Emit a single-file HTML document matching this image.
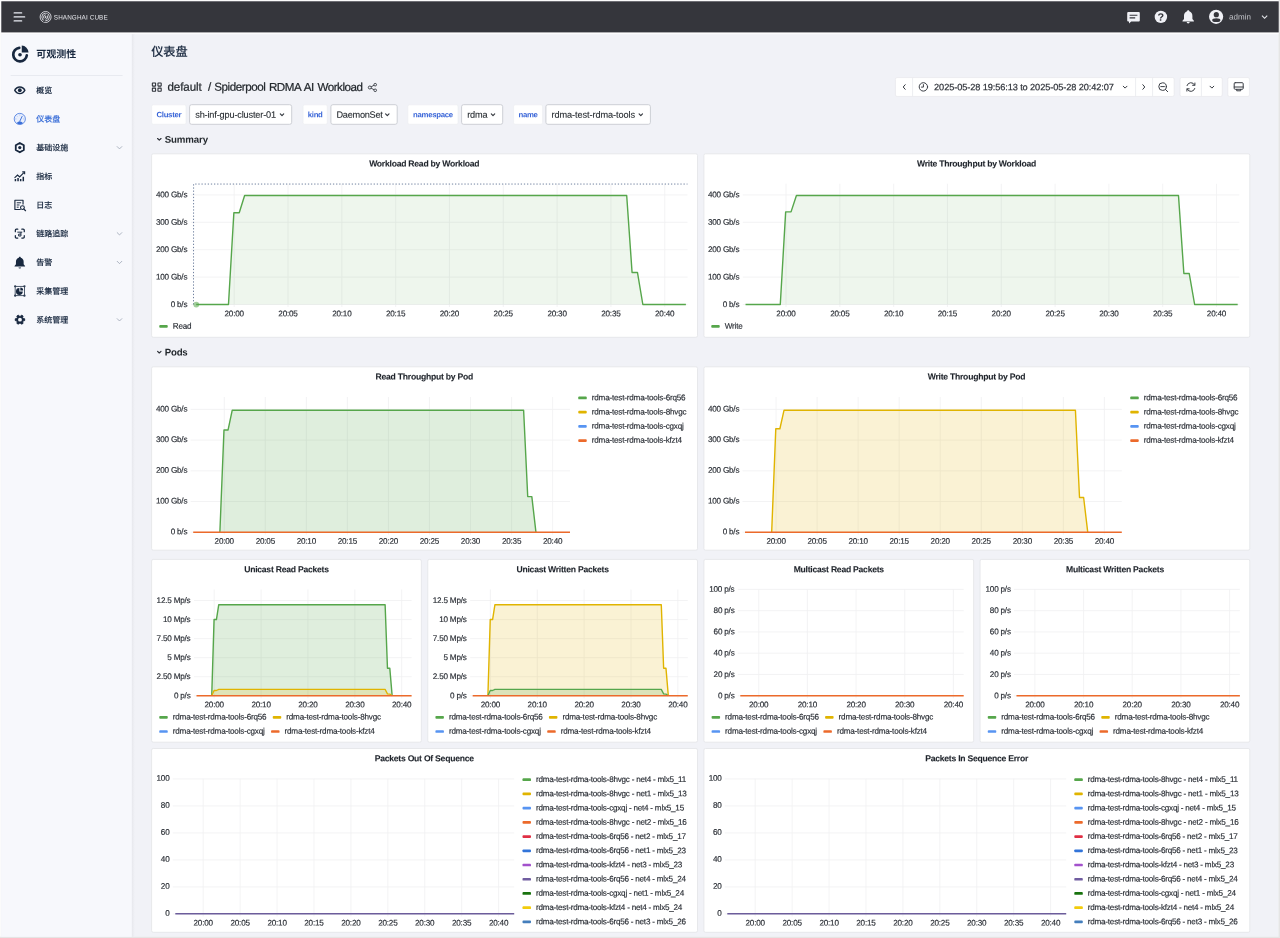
<!DOCTYPE html>
<html lang="zh-CN"><head><meta charset="utf-8"><title>仪表盘 - Spiderpool RDMA AI Workload</title>
<style>
*{box-sizing:border-box;margin:0;padding:0}
html,body{width:1280px;height:938px;overflow:hidden;background:#fff}
body{font-family:"Liberation Sans","Noto Sans CJK SC",sans-serif;color:#24292e;position:relative}
#frame{will-change:transform;position:absolute;left:0;top:0;width:1280px;height:938px;background:#fafafa;overflow:hidden}
#header{position:absolute;left:0;top:0;width:1280px;height:32px}
#sidebar{position:absolute;left:0;top:32px;width:140px;height:906px}
.abs{position:absolute}
</style></head>
<body>
<div id="frame">
<svg width="1280" height="938" viewBox="0 0 1280 938" style="position:absolute;left:0;top:0"><defs><linearGradient id="sh" x1="0" x2="1" y1="0" y2="0"><stop offset="0" stop-color="#e6e7ec"/><stop offset="0.35" stop-color="#eaebf0"/><stop offset="1" stop-color="#f1f2f7"/></linearGradient></defs><rect x="0" y="0" width="1280" height="938" fill="#fbfbfb"/><rect x="1.3" y="1.3" width="1277.3" height="935.6" fill="#f1f2f7"/><rect x="1278.5" y="0" width="1.5" height="938" fill="#e5e5e5"/><rect x="0" y="936.8" width="1280" height="1.2" fill="#e5e5e4"/><rect x="1.3" y="32" width="1277.3" height="2.2" fill="#fdfdfe"/><rect x="1.3" y="1.3" width="1277.4" height="31.1" fill="#35363c"/><rect x="131.7" y="34.2" width="3.2" height="902.6" fill="url(#sh)"/><rect x="1.3" y="34.2" width="130.4" height="902.6" fill="#f7f8fc"/><rect x="151.65" y="104.85" width="34.40" height="19.40" rx="1.6" fill="#fff" stroke="#eceef1" stroke-width="0.7"/><rect x="303.05" y="104.85" width="24.20" height="19.40" rx="1.6" fill="#fff" stroke="#eceef1" stroke-width="0.7"/><rect x="407.85" y="104.85" width="50.20" height="19.40" rx="1.6" fill="#fff" stroke="#eceef1" stroke-width="0.7"/><rect x="513.55" y="104.85" width="29.00" height="19.40" rx="1.6" fill="#fff" stroke="#eceef1" stroke-width="0.7"/><rect x="189.60" y="104.70" width="102.10" height="19.60" rx="2" fill="#fff" stroke="#cdcfd5" stroke-width="1"/><rect x="330.90" y="104.70" width="66.30" height="19.60" rx="2" fill="#fff" stroke="#cdcfd5" stroke-width="1"/><rect x="461.60" y="104.70" width="41.10" height="19.60" rx="2" fill="#fff" stroke="#cdcfd5" stroke-width="1"/><rect x="545.90" y="104.70" width="104.50" height="19.60" rx="2" fill="#fff" stroke="#cdcfd5" stroke-width="1"/><rect x="895.45" y="77.55" width="278.70" height="18.90" rx="1.6" fill="#fff" stroke="#e6e7eb" stroke-width="0.7"/><rect x="1180.05" y="77.55" width="42.20" height="18.90" rx="1.6" fill="#fff" stroke="#e6e7eb" stroke-width="0.7"/><rect x="1227.75" y="77.55" width="21.70" height="18.90" rx="1.6" fill="#fff" stroke="#e6e7eb" stroke-width="0.7"/><path d="M912.6 77.7v18.4M1135.6 77.7v18.4M1152.6 77.7v18.4M1201.4 77.7v18.4" stroke="#e7e8ec" stroke-width="0.8"/><rect x="151.6" y="153.8" width="545.9" height="183.5" rx="1.6" fill="#fff" stroke="#e7e8eb" stroke-width="1"/><rect x="703.9" y="153.8" width="545.9" height="183.5" rx="1.6" fill="#fff" stroke="#e7e8eb" stroke-width="1"/><rect x="151.6" y="366.8" width="545.9" height="183.4" rx="1.6" fill="#fff" stroke="#e7e8eb" stroke-width="1"/><rect x="703.9" y="366.8" width="545.9" height="183.4" rx="1.6" fill="#fff" stroke="#e7e8eb" stroke-width="1"/><rect x="151.6" y="748.5" width="545.9" height="183.8" rx="1.6" fill="#fff" stroke="#e7e8eb" stroke-width="1"/><rect x="703.9" y="748.5" width="545.9" height="183.8" rx="1.6" fill="#fff" stroke="#e7e8eb" stroke-width="1"/><rect x="151.6" y="559.4" width="269.75" height="182.8" rx="1.6" fill="#fff" stroke="#e7e8eb" stroke-width="1"/><rect x="427.75" y="559.4" width="269.75" height="182.8" rx="1.6" fill="#fff" stroke="#e7e8eb" stroke-width="1"/><rect x="703.9" y="559.4" width="269.75" height="182.8" rx="1.6" fill="#fff" stroke="#e7e8eb" stroke-width="1"/><rect x="980.05" y="559.4" width="269.75" height="182.8" rx="1.6" fill="#fff" stroke="#e7e8eb" stroke-width="1"/></svg>
<div id="header">
<svg class="abs" style="left:0;top:0" width="140" height="32" viewBox="0 -0.4 140 32">
 <g stroke="#eceef5" stroke-width="1.35" stroke-linecap="round" fill="none">
  <path d="M14.2 12.5H21.6M14.2 16.5H24.6M14.2 20.5H21.6"/></g>
 <g fill="none" stroke="#e8e9ee" stroke-width="0.85">
  <circle cx="45.6" cy="16.6" r="5.5"/><circle cx="45.6" cy="16.6" r="3.8"/><circle cx="45.6" cy="16.6" r="2.1"/>
  <path d="M45.6 16.6L43.6 21.8M45.6 16.6L47.2 13.2" stroke="#35363c" stroke-width="1.1"/>
  <circle cx="45.6" cy="16.6" r="0.6" fill="#e4e5ea"/>
 </g>
 <text x="53.8" y="19" font-size="6.4" font-weight="400" fill="#e2e3e8" letter-spacing="0.12" textLength="54" lengthAdjust="spacingAndGlyphs" transform="rotate(0.03 53.8 19)" style="font-family:'Liberation Sans','Noto Sans CJK SC',sans-serif">SHANGHAI CUBE</text>
</svg>
<svg class="abs" style="left:1120px;top:0" width="160" height="32" viewBox="1120 0 160 32">
 <!-- chat -->
 <path d="M1128.2 12.1h10.6a1 1 0 0 1 1 1v7.4a1 1 0 0 1-1 1h-7.6l-2.2 2v-2h-.8a1 1 0 0 1-1-1v-7.4a1 1 0 0 1 1-1z" fill="#f0f1f6"/>
 <path d="M1129.6 15.2h7.8M1129.6 17.9h5.6" stroke="#35363c" stroke-width="1.1"/>
 <!-- help -->
 <circle cx="1160.9" cy="16.9" r="6.2" fill="#f0f1f6"/>
 <text x="1160.9" y="20.8" transform="rotate(0.03 1160.9 20.8)" text-anchor="middle" font-size="10.8" font-weight="700" fill="#35363c" style="font-family:'Liberation Sans','Noto Sans CJK SC',sans-serif">?</text>
 <!-- bell -->
 <path d="M1188.2 10.2c.7 0 1.1.5 1.1 1.1 2 .6 3.1 2.300 3.100 4.600v3l1.500 1.900v.6h-11.400v-.6l1.500-1.900v-3c0-2.300 1.100-4 3.100-4.600 0-.6.400-1.100 1.100-1.100z" fill="#f0f1f6"/>
 <path d="M1186.7 22.1h3a1.500 1.300 0 0 1-3 0z" fill="#f0f1f6"/>
 <!-- avatar -->
 <circle cx="1216.1" cy="16.8" r="7.1" fill="#f0f1f6"/>
 <circle cx="1216.3" cy="14.7" r="2.6" fill="#35363c"/>
 <ellipse cx="1216.3" cy="20.2" rx="4.1" ry="1.9" fill="#35363c"/>
 <text x="1229.1" y="19.600" transform="rotate(0.03 1229.1 19.6)" font-size="8" fill="#c4c5ca" style="font-family:'Liberation Sans','Noto Sans CJK SC',sans-serif">admin</text>
 <path d="M1262 15.700l2.600 2.600 2.600-2.600" fill="none" stroke="#e4e5ea" stroke-width="1.150"/>
</svg>
</div>
<svg id="sidebar" width="140" height="906" viewBox="0 32 140 906" style="position:absolute;left:0;top:32px;font-family:'Liberation Sans','Noto Sans CJK SC',sans-serif">
<g transform="translate(10.3 44.2) scale(1.078)">
 <path d="M8.300 3.400A6.300 6.300 0 1 0 15.300 10.400" fill="none" stroke="#18283f" stroke-width="2.500" stroke-linecap="round"/>
 <path d="M10.600 1.300a6.500 6.500 0 0 1 6.300 6.300h-6.300z" fill="#18283f"/>
 <circle cx="9" cy="9.800" r="1.700" fill="#18283f"/>
</g>
<text x="36.2" y="57.45" transform="rotate(0.03 36.2 57.45)" font-size="10" font-weight="700" fill="#18283f">可观测性</text>
<rect x="10.600" y="75.250" width="112" height="0.750" fill="#e3e6ed"/>
<g transform="translate(12.80 83.25) scale(0.875)"><path d="M1.300 8C2.700 5 5.100 3.400 8 3.400s5.300 1.600 6.700 4.600c-1.400 3-3.800 4.600-6.700 4.600S2.700 11 1.300 8z" fill="#18283f"/><path d="M3.200 8C4.300 6.100 6 5 8 5s3.700 1.100 4.800 3c-1.100 1.900-2.800 3-4.800 3S4.300 9.900 3.200 8z" fill="#f7f8fc"/><circle cx="8" cy="8" r="2.150" fill="#18283f"/></g><text x="36.15" y="93.20" transform="rotate(0.03 36.15 93.20)" font-size="8" font-weight="500" fill="#18283f" stroke="#18283f" stroke-width="0.12">概览</text><g transform="translate(12.80 111.93) scale(0.875)"><circle cx="8" cy="8" r="6.400" fill="#e9effc" stroke="#4a7be0" stroke-width="0.95"/><path d="M4.300 12.900a6.400 6.400 0 0 0 7.400 0c-.9-1.300-2.200-1.900-3.700-1.900s-2.800.6-3.700 1.900z" fill="#3b6fd8"/><path d="M8 10.600L10.600 5.200" stroke="#3b6fd8" stroke-width="1.100" stroke-linecap="round"/><path d="M8 3v1M4.400 4.400l.7.700M3 8h1M12 8h1M11.600 4.400l-.5.500" stroke="#6a93e6" stroke-width="0.700"/></g><text x="36.15" y="121.88" transform="rotate(0.03 36.15 121.88)" font-size="8" font-weight="500" fill="#3b6fd8" stroke="#3b6fd8" stroke-width="0.12">仪表盘</text><g transform="translate(12.80 140.61) scale(0.875)"><path d="M8 2.700l4.600 2.650v5.300L8 13.300 3.400 10.650V5.350z" fill="none" stroke="#18283f" stroke-width="2.050" stroke-linejoin="round"/><circle cx="8" cy="8" r="1.850" fill="#18283f"/></g><text x="36.15" y="150.56" transform="rotate(0.03 36.15 150.56)" font-size="8" font-weight="500" fill="#18283f" stroke="#18283f" stroke-width="0.12">基础设施</text><path d="M116.90 146.31l2.600 2.600 2.600-2.600" fill="none" stroke="#9aa3b2" stroke-width="0.800"/><g transform="translate(12.80 169.29) scale(0.875)"><path d="M2 9.800l3.400-3.300 2.400 2.200 4.900-5" fill="none" stroke="#18283f" stroke-width="1.300"/><path d="M10.800 3h2.700v2.700" fill="none" stroke="#18283f" stroke-width="1.300"/><path d="M3 11.200v2.600M6 10v3.800M9 11v2.800M12 8.500v5.300" stroke="#18283f" stroke-width="1.700"/></g><text x="36.15" y="179.24" transform="rotate(0.03 36.15 179.24)" font-size="8" font-weight="500" fill="#18283f" stroke="#18283f" stroke-width="0.12">指标</text><g transform="translate(12.80 197.97) scale(0.875)"><path d="M9 13.200H2.400V2.600h9.300V7.500" fill="none" stroke="#18283f" stroke-width="1.300" stroke-linejoin="round"/><path d="M4.500 5.500h5M4.500 8h3.200M4.500 10.500h2.200" stroke="#18283f" stroke-width="1.100"/><circle cx="11" cy="11" r="2.200" fill="none" stroke="#18283f" stroke-width="1.200"/><path d="M12.600 12.600l2 2" stroke="#18283f" stroke-width="1.300" stroke-linecap="round"/></g><text x="36.15" y="207.92" transform="rotate(0.03 36.15 207.92)" font-size="8" font-weight="500" fill="#18283f" stroke="#18283f" stroke-width="0.12">日志</text><g transform="translate(12.80 226.65) scale(0.875)"><path d="M2.900 5.700V4.100a1.200 1.200 0 0 1 1.200-1.200h1.600M10.300 2.900h1.600a1.200 1.200 0 0 1 1.200 1.200v1.600M13.100 10.300v1.600a1.200 1.200 0 0 1-1.200 1.200h-1.600M5.700 13.100H4.100a1.200 1.200 0 0 1-1.200-1.200v-1.600" fill="none" stroke="#18283f" stroke-width="1.400" stroke-linecap="round"/><path d="M5.200 6.300h5.600M9.300 6.300v4.400H6.700V8.500h2.600" fill="none" stroke="#18283f" stroke-width="1.100"/></g><text x="36.15" y="236.60" transform="rotate(0.03 36.15 236.60)" font-size="8" font-weight="500" fill="#18283f" stroke="#18283f" stroke-width="0.12">链路追踪</text><path d="M116.90 232.35l2.600 2.600 2.600-2.600" fill="none" stroke="#9aa3b2" stroke-width="0.800"/><g transform="translate(12.80 255.33) scale(0.875)"><path d="M8 1.600c.7 0 1.100.500 1.100 1.100 2 .6 3.300 2.300 3.300 4.600v3l1.600 1.900v.7H2v-.7l1.600-1.900v-3c0-2.300 1.300-4 3.300-4.600 0-.6.400-1.100 1.100-1.100z" fill="#18283f"/><path d="M6.500 13.800h3a1.500 1.300 0 0 1-3 0z" fill="#18283f"/></g><text x="36.15" y="265.28" transform="rotate(0.03 36.15 265.28)" font-size="8" font-weight="500" fill="#18283f" stroke="#18283f" stroke-width="0.12">告警</text><path d="M116.90 261.03l2.600 2.600 2.600-2.600" fill="none" stroke="#9aa3b2" stroke-width="0.800"/><g transform="translate(12.80 284.01) scale(0.875)"><rect x="2.700" y="2.700" width="10.600" height="10.600" fill="none" stroke="#2c3b50" stroke-width="0.950"/><circle cx="2.700" cy="2.700" r="1.300" fill="#2c3b50"/><circle cx="13.300" cy="2.700" r="1.300" fill="#2c3b50"/><circle cx="2.700" cy="13.300" r="1.300" fill="#2c3b50"/><circle cx="13.300" cy="13.300" r="1.300" fill="#2c3b50"/><path d="M7.500 4.700a3.900 3.900 0 1 0 3.900 3.900h-3.900z" fill="#18283f"/><path d="M8.600 4.100a3.300 3.300 0 0 1 3.300 3.300h-3.300z" fill="#18283f"/></g><text x="36.15" y="293.96" transform="rotate(0.03 36.15 293.96)" font-size="8" font-weight="500" fill="#18283f" stroke="#18283f" stroke-width="0.12">采集管理</text><g transform="translate(12.80 312.69) scale(0.875)"><path d="M11.98 6.70L13.55 6.96L13.55 9.04L11.98 9.30L11.22 10.62L11.78 12.11L9.97 13.15L8.96 11.93L7.44 11.93L6.43 13.15L4.62 12.11L5.18 10.62L4.42 9.30L2.85 9.04L2.85 6.96L4.42 6.70L5.18 5.38L4.62 3.89L6.43 2.85L7.44 4.07L8.96 4.07L9.97 2.85L11.78 3.89L11.22 5.38z" fill="#18283f" stroke="#18283f" stroke-width="1.1" stroke-linejoin="round"/><circle cx="8.2" cy="8" r="2.2" fill="#f7f8fc"/></g><text x="36.15" y="322.64" transform="rotate(0.03 36.15 322.64)" font-size="8" font-weight="500" fill="#18283f" stroke="#18283f" stroke-width="0.12">系统管理</text><path d="M116.90 318.39l2.600 2.600 2.600-2.600" fill="none" stroke="#9aa3b2" stroke-width="0.800"/>
</svg>
<svg width="1140" height="330" viewBox="140 36 1140 330" style="position:absolute;left:140px;top:36px;font-family:'Liberation Sans','Noto Sans CJK SC',sans-serif">
<text x="151.20" y="55.97" transform="rotate(0.03 151.20 55.97)" font-size="12.2" font-weight="500" fill="#1c2b41" stroke="#1c2b41" stroke-width="0.12" letter-spacing="0" text-anchor="start" xml:space="preserve">仪表盘</text>
<g fill="none" stroke="#2b2f36" stroke-width="1.050"><rect x="152.350" y="82.950" width="3.250" height="3.150" rx="0.300"/><rect x="157.950" y="82.950" width="3.250" height="3.150" rx="0.300"/><rect x="152.350" y="88.100" width="3.250" height="3.150" rx="0.300"/><rect x="157.950" y="88.100" width="3.250" height="3.150" rx="0.300"/></g>
<text x="167.40" y="90.85" transform="rotate(0.03 167.40 90.85)" font-size="11.6" font-weight="400" fill="#24292e" stroke="#24292e" stroke-width="0.22" letter-spacing="-0.08" text-anchor="start" xml:space="preserve">default</text>
<text x="207.90" y="90.85" transform="rotate(0.03 207.90 90.85)" font-size="11.6" font-weight="400" fill="#24292e" stroke="#24292e" stroke-width="0.22" letter-spacing="-0.45" word-spacing="0.9" text-anchor="start" xml:space="preserve">/ Spiderpool RDMA AI Workload</text>
<g fill="none" stroke="#2b2f36" stroke-width="0.850"><circle cx="369.800" cy="87.500" r="1.500"/><circle cx="375.200" cy="84.700" r="1.300"/><circle cx="375.200" cy="90.300" r="1.300"/><path d="M371.100 86.800l2.900-1.500M371.100 88.200l2.900 1.500"/></g>
<text x="168.85" y="117.29" transform="rotate(0.03 168.85 117.29)" font-size="7.8" font-weight="700" fill="#3a66d8" letter-spacing="-0.3" text-anchor="middle" xml:space="preserve">Cluster</text><text x="195.25" y="117.69" transform="rotate(0.03 195.25 117.69)" font-size="9.2" font-weight="400" fill="#24292e" stroke="#24292e" stroke-width="0.1" letter-spacing="-0.17" text-anchor="start" xml:space="preserve">sh-inf-gpu-cluster-01</text><path d="M280.30 113.85l1.7 1.7 1.7-1.7" fill="none" stroke="#33373e" stroke-width="1.15" stroke-linecap="round" stroke-linejoin="round"/>
<text x="315.15" y="117.29" transform="rotate(0.03 315.15 117.29)" font-size="7.8" font-weight="700" fill="#3a66d8" letter-spacing="-0.3" text-anchor="middle" xml:space="preserve">kind</text><text x="336.50" y="117.69" transform="rotate(0.03 336.50 117.69)" font-size="9.2" font-weight="400" fill="#24292e" stroke="#24292e" stroke-width="0.1" letter-spacing="-0.28" text-anchor="start" xml:space="preserve">DaemonSet</text><path d="M385.60 113.85l1.7 1.7 1.7-1.7" fill="none" stroke="#33373e" stroke-width="1.15" stroke-linecap="round" stroke-linejoin="round"/>
<text x="432.95" y="117.29" transform="rotate(0.03 432.95 117.29)" font-size="7.8" font-weight="700" fill="#3a66d8" letter-spacing="-0.3" text-anchor="middle" xml:space="preserve">namespace</text><text x="467.25" y="117.69" transform="rotate(0.03 467.25 117.69)" font-size="9.2" font-weight="400" fill="#24292e" stroke="#24292e" stroke-width="0.1" letter-spacing="-0.2" text-anchor="start" xml:space="preserve">rdma</text><path d="M491.30 113.85l1.7 1.7 1.7-1.7" fill="none" stroke="#33373e" stroke-width="1.15" stroke-linecap="round" stroke-linejoin="round"/>
<text x="528.05" y="117.29" transform="rotate(0.03 528.05 117.29)" font-size="7.8" font-weight="700" fill="#3a66d8" letter-spacing="-0.3" text-anchor="middle" xml:space="preserve">name</text><text x="551.50" y="117.69" transform="rotate(0.03 551.50 117.69)" font-size="9.2" font-weight="400" fill="#24292e" stroke="#24292e" stroke-width="0.1" letter-spacing="-0.09" text-anchor="start" xml:space="preserve">rdma-test-rdma-tools</text><path d="M639.10 113.85l1.7 1.7 1.7-1.7" fill="none" stroke="#33373e" stroke-width="1.15" stroke-linecap="round" stroke-linejoin="round"/>
 <g fill="none" stroke="#3a3e45" stroke-width="1" stroke-linecap="round" stroke-linejoin="round">
  <path d="M905.200 84.700l-2 2.300 2 2.300"/>
  <circle cx="923.400" cy="86.900" r="4.200"/><path d="M923.400 84.600v2.500h-1.900"/>
  <path d="M1123.200 86.200l1.900 1.900 1.900-1.900"/>
  <path d="M1142.800 84.700l2 2.300-2 2.300"/>
  <circle cx="1162.600" cy="86.600" r="3.800"/><path d="M1160.800 86.600h3.600M1165.400 89.400l2.300 2.300"/>
  <path d="M1187 85.600a4.100 4.100 0 0 1 7.600-.6M1194.900 83v2.300h-2.300M1194.800 88.500a4.100 4.100 0 0 1-7.600.6M1186.900 91.100v-2.300h2.300"/>
  <path d="M1210 86.200l1.900 1.900 1.900-1.900"/>
  <rect x="1234.200" y="82.700" width="9" height="6.600" rx="1"/><path d="M1234.200 87h9M1236.700 89.400v1.400h4v-1.400"/>
 </g>
<text x="934.10" y="90.19" transform="rotate(0.03 934.10 90.19)" font-size="9.2" font-weight="400" fill="#2b2f36" stroke="#2b2f36" stroke-width="0.2" letter-spacing="-0.09" text-anchor="start" xml:space="preserve">2025-05-28 19:56:13 to 2025-05-28 20:42:07</text>
 <path d="M157.600 138.500l1.700 1.700 1.700-1.700M157.600 351.300l1.700 1.700 1.700-1.700" fill="none" stroke="#2b2f36" stroke-width="1.150" stroke-linecap="round" stroke-linejoin="round"/>
<text x="164.70" y="142.67" transform="rotate(0.03 164.70 142.67)" font-size="9.7" font-weight="700" fill="#24292e" letter-spacing="-0.13" text-anchor="start" xml:space="preserve">Summary</text>
<text x="164.70" y="355.47" transform="rotate(0.03 164.70 355.47)" font-size="9.7" font-weight="700" fill="#24292e" letter-spacing="-0.22" text-anchor="start" xml:space="preserve">Pods</text>
</svg>
<svg width="1280" height="938" viewBox="0 0 1280 938" style="position:absolute;left:0;top:0;font-family:'Liberation Sans','Noto Sans CJK SC',sans-serif"><line x1="191" x2="687.5" y1="304.5" y2="304.5" stroke="#f0f0f1" stroke-width="0.8"/>
<text x="187.25" y="306.92" transform="rotate(0.03 187.25 306.92)" stroke="#2a2e35" stroke-width="0.16" text-anchor="end" font-size="8.15" font-weight="400" fill="#2a2e35" letter-spacing="-0.2">0 b/s</text>
<line x1="191" x2="687.5" y1="277.1" y2="277.1" stroke="#f0f0f1" stroke-width="0.8"/>
<text x="187.25" y="279.52" transform="rotate(0.03 187.25 279.52)" stroke="#2a2e35" stroke-width="0.16" text-anchor="end" font-size="8.15" font-weight="400" fill="#2a2e35" letter-spacing="-0.2">100 Gb/s</text>
<line x1="191" x2="687.5" y1="249.7" y2="249.7" stroke="#f0f0f1" stroke-width="0.8"/>
<text x="187.25" y="252.12" transform="rotate(0.03 187.25 252.12)" stroke="#2a2e35" stroke-width="0.16" text-anchor="end" font-size="8.15" font-weight="400" fill="#2a2e35" letter-spacing="-0.2">200 Gb/s</text>
<line x1="191" x2="687.5" y1="222.3" y2="222.3" stroke="#f0f0f1" stroke-width="0.8"/>
<text x="187.25" y="224.72" transform="rotate(0.03 187.25 224.72)" stroke="#2a2e35" stroke-width="0.16" text-anchor="end" font-size="8.15" font-weight="400" fill="#2a2e35" letter-spacing="-0.2">300 Gb/s</text>
<line x1="191" x2="687.5" y1="194.9" y2="194.9" stroke="#f0f0f1" stroke-width="0.8"/>
<text x="187.25" y="197.32" transform="rotate(0.03 187.25 197.32)" stroke="#2a2e35" stroke-width="0.16" text-anchor="end" font-size="8.15" font-weight="400" fill="#2a2e35" letter-spacing="-0.2">400 Gb/s</text>
<line x1="234.21" x2="234.21" y1="183.75" y2="307" stroke="#f0f0f1" stroke-width="0.8"/>
<text x="234.21" y="316.32" transform="rotate(0.03 234.21 316.32)" stroke="#2a2e35" stroke-width="0.16" text-anchor="middle" font-size="8.15" font-weight="400" fill="#2a2e35" letter-spacing="-0.2">20:00</text>
<line x1="288.03" x2="288.03" y1="183.75" y2="307" stroke="#f0f0f1" stroke-width="0.8"/>
<text x="288.03" y="316.32" transform="rotate(0.03 288.03 316.32)" stroke="#2a2e35" stroke-width="0.16" text-anchor="middle" font-size="8.15" font-weight="400" fill="#2a2e35" letter-spacing="-0.2">20:05</text>
<line x1="341.84" x2="341.84" y1="183.75" y2="307" stroke="#f0f0f1" stroke-width="0.8"/>
<text x="341.84" y="316.32" transform="rotate(0.03 341.84 316.32)" stroke="#2a2e35" stroke-width="0.16" text-anchor="middle" font-size="8.15" font-weight="400" fill="#2a2e35" letter-spacing="-0.2">20:10</text>
<line x1="395.65" x2="395.65" y1="183.75" y2="307" stroke="#f0f0f1" stroke-width="0.8"/>
<text x="395.65" y="316.32" transform="rotate(0.03 395.65 316.32)" stroke="#2a2e35" stroke-width="0.16" text-anchor="middle" font-size="8.15" font-weight="400" fill="#2a2e35" letter-spacing="-0.2">20:15</text>
<line x1="449.47" x2="449.47" y1="183.75" y2="307" stroke="#f0f0f1" stroke-width="0.8"/>
<text x="449.47" y="316.32" transform="rotate(0.03 449.47 316.32)" stroke="#2a2e35" stroke-width="0.16" text-anchor="middle" font-size="8.15" font-weight="400" fill="#2a2e35" letter-spacing="-0.2">20:20</text>
<line x1="503.28" x2="503.28" y1="183.75" y2="307" stroke="#f0f0f1" stroke-width="0.8"/>
<text x="503.28" y="316.32" transform="rotate(0.03 503.28 316.32)" stroke="#2a2e35" stroke-width="0.16" text-anchor="middle" font-size="8.15" font-weight="400" fill="#2a2e35" letter-spacing="-0.2">20:25</text>
<line x1="557.09" x2="557.09" y1="183.75" y2="307" stroke="#f0f0f1" stroke-width="0.8"/>
<text x="557.09" y="316.32" transform="rotate(0.03 557.09 316.32)" stroke="#2a2e35" stroke-width="0.16" text-anchor="middle" font-size="8.15" font-weight="400" fill="#2a2e35" letter-spacing="-0.2">20:30</text>
<line x1="610.9" x2="610.9" y1="183.75" y2="307" stroke="#f0f0f1" stroke-width="0.8"/>
<text x="610.9" y="316.32" transform="rotate(0.03 610.9 316.32)" stroke="#2a2e35" stroke-width="0.16" text-anchor="middle" font-size="8.15" font-weight="400" fill="#2a2e35" letter-spacing="-0.2">20:35</text>
<line x1="664.72" x2="664.72" y1="183.75" y2="307" stroke="#f0f0f1" stroke-width="0.8"/>
<text x="664.72" y="316.32" transform="rotate(0.03 664.72 316.32)" stroke="#2a2e35" stroke-width="0.16" text-anchor="middle" font-size="8.15" font-weight="400" fill="#2a2e35" letter-spacing="-0.2">20:40</text>
<path d="M196.19 304.5 L228.48 304.5 L233.86 212.71 L239.24 212.71 L244.62 195.45 L626.69 195.45 L632.07 272.44 L637.45 272.44 L642.84 304.5 L685.89 304.5 L685.89 304.5 L196.19 304.5 Z" fill="rgba(86,166,75,0.10)" stroke="none"/>
<path d="M196.19 304.5 L228.48 304.5 L233.86 212.71 L239.24 212.71 L244.62 195.45 L626.69 195.45 L632.07 272.44 L637.45 272.44 L642.84 304.5 L685.89 304.5" fill="none" stroke="#56a64b" stroke-width="1.4" stroke-linejoin="round"/>
<text x="424.25" y="166.58" transform="rotate(0.03 424.25 166.58)" stroke="#1f242b" stroke-width="0.1" text-anchor="middle" font-size="8.6" font-weight="700" fill="#1f242b" letter-spacing="-0.24">Workload Read by Workload</text>
<rect x="159.25" y="325.05" width="8.5" height="2.7" rx="0.9" fill="#56a64b"/>
<text x="172.75" y="328.67" transform="rotate(0.03 172.75 328.67)" stroke="#2a2e35" stroke-width="0.16" text-anchor="start" font-size="8.15" font-weight="400" fill="#2a2e35" letter-spacing="-0.2">Read</text>
<line x1="742.8" x2="1239.3" y1="304.5" y2="304.5" stroke="#f0f0f1" stroke-width="0.8"/>
<text x="739.25" y="306.92" transform="rotate(0.03 739.25 306.92)" stroke="#2a2e35" stroke-width="0.16" text-anchor="end" font-size="8.15" font-weight="400" fill="#2a2e35" letter-spacing="-0.2">0 b/s</text>
<line x1="742.8" x2="1239.3" y1="277.1" y2="277.1" stroke="#f0f0f1" stroke-width="0.8"/>
<text x="739.25" y="279.52" transform="rotate(0.03 739.25 279.52)" stroke="#2a2e35" stroke-width="0.16" text-anchor="end" font-size="8.15" font-weight="400" fill="#2a2e35" letter-spacing="-0.2">100 Gb/s</text>
<line x1="742.8" x2="1239.3" y1="249.7" y2="249.7" stroke="#f0f0f1" stroke-width="0.8"/>
<text x="739.25" y="252.12" transform="rotate(0.03 739.25 252.12)" stroke="#2a2e35" stroke-width="0.16" text-anchor="end" font-size="8.15" font-weight="400" fill="#2a2e35" letter-spacing="-0.2">200 Gb/s</text>
<line x1="742.8" x2="1239.3" y1="222.3" y2="222.3" stroke="#f0f0f1" stroke-width="0.8"/>
<text x="739.25" y="224.72" transform="rotate(0.03 739.25 224.72)" stroke="#2a2e35" stroke-width="0.16" text-anchor="end" font-size="8.15" font-weight="400" fill="#2a2e35" letter-spacing="-0.2">300 Gb/s</text>
<line x1="742.8" x2="1239.3" y1="194.9" y2="194.9" stroke="#f0f0f1" stroke-width="0.8"/>
<text x="739.25" y="197.32" transform="rotate(0.03 739.25 197.32)" stroke="#2a2e35" stroke-width="0.16" text-anchor="end" font-size="8.15" font-weight="400" fill="#2a2e35" letter-spacing="-0.2">400 Gb/s</text>
<line x1="786.01" x2="786.01" y1="183.75" y2="307" stroke="#f0f0f1" stroke-width="0.8"/>
<text x="786.01" y="316.32" transform="rotate(0.03 786.01 316.32)" stroke="#2a2e35" stroke-width="0.16" text-anchor="middle" font-size="8.15" font-weight="400" fill="#2a2e35" letter-spacing="-0.2">20:00</text>
<line x1="839.83" x2="839.83" y1="183.75" y2="307" stroke="#f0f0f1" stroke-width="0.8"/>
<text x="839.83" y="316.32" transform="rotate(0.03 839.83 316.32)" stroke="#2a2e35" stroke-width="0.16" text-anchor="middle" font-size="8.15" font-weight="400" fill="#2a2e35" letter-spacing="-0.2">20:05</text>
<line x1="893.64" x2="893.64" y1="183.75" y2="307" stroke="#f0f0f1" stroke-width="0.8"/>
<text x="893.64" y="316.32" transform="rotate(0.03 893.64 316.32)" stroke="#2a2e35" stroke-width="0.16" text-anchor="middle" font-size="8.15" font-weight="400" fill="#2a2e35" letter-spacing="-0.2">20:10</text>
<line x1="947.45" x2="947.45" y1="183.75" y2="307" stroke="#f0f0f1" stroke-width="0.8"/>
<text x="947.45" y="316.32" transform="rotate(0.03 947.45 316.32)" stroke="#2a2e35" stroke-width="0.16" text-anchor="middle" font-size="8.15" font-weight="400" fill="#2a2e35" letter-spacing="-0.2">20:15</text>
<line x1="1001.27" x2="1001.27" y1="183.75" y2="307" stroke="#f0f0f1" stroke-width="0.8"/>
<text x="1001.27" y="316.32" transform="rotate(0.03 1001.27 316.32)" stroke="#2a2e35" stroke-width="0.16" text-anchor="middle" font-size="8.15" font-weight="400" fill="#2a2e35" letter-spacing="-0.2">20:20</text>
<line x1="1055.08" x2="1055.08" y1="183.75" y2="307" stroke="#f0f0f1" stroke-width="0.8"/>
<text x="1055.08" y="316.32" transform="rotate(0.03 1055.08 316.32)" stroke="#2a2e35" stroke-width="0.16" text-anchor="middle" font-size="8.15" font-weight="400" fill="#2a2e35" letter-spacing="-0.2">20:25</text>
<line x1="1108.89" x2="1108.89" y1="183.75" y2="307" stroke="#f0f0f1" stroke-width="0.8"/>
<text x="1108.89" y="316.32" transform="rotate(0.03 1108.89 316.32)" stroke="#2a2e35" stroke-width="0.16" text-anchor="middle" font-size="8.15" font-weight="400" fill="#2a2e35" letter-spacing="-0.2">20:30</text>
<line x1="1162.7" x2="1162.7" y1="183.75" y2="307" stroke="#f0f0f1" stroke-width="0.8"/>
<text x="1162.7" y="316.32" transform="rotate(0.03 1162.7 316.32)" stroke="#2a2e35" stroke-width="0.16" text-anchor="middle" font-size="8.15" font-weight="400" fill="#2a2e35" letter-spacing="-0.2">20:35</text>
<line x1="1216.52" x2="1216.52" y1="183.75" y2="307" stroke="#f0f0f1" stroke-width="0.8"/>
<text x="1216.52" y="316.32" transform="rotate(0.03 1216.52 316.32)" stroke="#2a2e35" stroke-width="0.16" text-anchor="middle" font-size="8.15" font-weight="400" fill="#2a2e35" letter-spacing="-0.2">20:40</text>
<path d="M745.52 304.5 L780.28 304.5 L785.66 211.89 L791.04 211.89 L796.42 195.45 L1178.49 195.45 L1183.87 273.54 L1189.25 273.54 L1194.64 304.5 L1237.69 304.5 L1237.69 304.5 L745.52 304.5 Z" fill="rgba(86,166,75,0.10)" stroke="none"/>
<path d="M745.52 304.5 L780.28 304.5 L785.66 211.89 L791.04 211.89 L796.42 195.45 L1178.49 195.45 L1183.87 273.54 L1189.25 273.54 L1194.64 304.5 L1237.69 304.5" fill="none" stroke="#56a64b" stroke-width="1.4" stroke-linejoin="round"/>
<text x="976.45" y="166.58" transform="rotate(0.03 976.45 166.58)" stroke="#1f242b" stroke-width="0.1" text-anchor="middle" font-size="8.6" font-weight="700" fill="#1f242b" letter-spacing="-0.24">Write Throughput by Workload</text>
<rect x="711.25" y="325.05" width="8.5" height="2.7" rx="0.9" fill="#56a64b"/>
<text x="724.75" y="328.67" transform="rotate(0.03 724.75 328.67)" stroke="#2a2e35" stroke-width="0.16" text-anchor="start" font-size="8.15" font-weight="400" fill="#2a2e35" letter-spacing="-0.2">Write</text>
<path d="M193.5 304.5 L193.6 184.05 L687.5 184.05" fill="none" stroke="#70819f" stroke-width="1" stroke-dasharray="1.3 1.83"/>
<circle cx="196.3" cy="304.6" r="2.9" fill="#56a64b" fill-opacity="0.55"/>
<line x1="190.7" x2="570" y1="532.2" y2="532.2" stroke="#f0f0f1" stroke-width="0.8"/>
<text x="187.25" y="534.22" transform="rotate(0.03 187.25 534.22)" stroke="#2a2e35" stroke-width="0.16" text-anchor="end" font-size="8.15" font-weight="400" fill="#2a2e35" letter-spacing="-0.2">0 b/s</text>
<line x1="190.7" x2="570" y1="501.5" y2="501.5" stroke="#f0f0f1" stroke-width="0.8"/>
<text x="187.25" y="503.52" transform="rotate(0.03 187.25 503.52)" stroke="#2a2e35" stroke-width="0.16" text-anchor="end" font-size="8.15" font-weight="400" fill="#2a2e35" letter-spacing="-0.2">100 Gb/s</text>
<line x1="190.7" x2="570" y1="470.8" y2="470.8" stroke="#f0f0f1" stroke-width="0.8"/>
<text x="187.25" y="472.82" transform="rotate(0.03 187.25 472.82)" stroke="#2a2e35" stroke-width="0.16" text-anchor="end" font-size="8.15" font-weight="400" fill="#2a2e35" letter-spacing="-0.2">200 Gb/s</text>
<line x1="190.7" x2="570" y1="440.1" y2="440.1" stroke="#f0f0f1" stroke-width="0.8"/>
<text x="187.25" y="442.12" transform="rotate(0.03 187.25 442.12)" stroke="#2a2e35" stroke-width="0.16" text-anchor="end" font-size="8.15" font-weight="400" fill="#2a2e35" letter-spacing="-0.2">300 Gb/s</text>
<line x1="190.7" x2="570" y1="409.4" y2="409.4" stroke="#f0f0f1" stroke-width="0.8"/>
<text x="187.25" y="411.42" transform="rotate(0.03 187.25 411.42)" stroke="#2a2e35" stroke-width="0.16" text-anchor="end" font-size="8.15" font-weight="400" fill="#2a2e35" letter-spacing="-0.2">400 Gb/s</text>
<line x1="224.26" x2="224.26" y1="397" y2="534.7" stroke="#f0f0f1" stroke-width="0.8"/>
<text x="224.26" y="543.82" transform="rotate(0.03 224.26 543.82)" stroke="#2a2e35" stroke-width="0.16" text-anchor="middle" font-size="8.15" font-weight="400" fill="#2a2e35" letter-spacing="-0.2">20:00</text>
<line x1="265.3" x2="265.3" y1="397" y2="534.7" stroke="#f0f0f1" stroke-width="0.8"/>
<text x="265.3" y="543.82" transform="rotate(0.03 265.3 543.82)" stroke="#2a2e35" stroke-width="0.16" text-anchor="middle" font-size="8.15" font-weight="400" fill="#2a2e35" letter-spacing="-0.2">20:05</text>
<line x1="306.35" x2="306.35" y1="397" y2="534.7" stroke="#f0f0f1" stroke-width="0.8"/>
<text x="306.35" y="543.82" transform="rotate(0.03 306.35 543.82)" stroke="#2a2e35" stroke-width="0.16" text-anchor="middle" font-size="8.15" font-weight="400" fill="#2a2e35" letter-spacing="-0.2">20:10</text>
<line x1="347.39" x2="347.39" y1="397" y2="534.7" stroke="#f0f0f1" stroke-width="0.8"/>
<text x="347.39" y="543.82" transform="rotate(0.03 347.39 543.82)" stroke="#2a2e35" stroke-width="0.16" text-anchor="middle" font-size="8.15" font-weight="400" fill="#2a2e35" letter-spacing="-0.2">20:15</text>
<line x1="388.44" x2="388.44" y1="397" y2="534.7" stroke="#f0f0f1" stroke-width="0.8"/>
<text x="388.44" y="543.82" transform="rotate(0.03 388.44 543.82)" stroke="#2a2e35" stroke-width="0.16" text-anchor="middle" font-size="8.15" font-weight="400" fill="#2a2e35" letter-spacing="-0.2">20:20</text>
<line x1="429.48" x2="429.48" y1="397" y2="534.7" stroke="#f0f0f1" stroke-width="0.8"/>
<text x="429.48" y="543.82" transform="rotate(0.03 429.48 543.82)" stroke="#2a2e35" stroke-width="0.16" text-anchor="middle" font-size="8.15" font-weight="400" fill="#2a2e35" letter-spacing="-0.2">20:25</text>
<line x1="470.53" x2="470.53" y1="397" y2="534.7" stroke="#f0f0f1" stroke-width="0.8"/>
<text x="470.53" y="543.82" transform="rotate(0.03 470.53 543.82)" stroke="#2a2e35" stroke-width="0.16" text-anchor="middle" font-size="8.15" font-weight="400" fill="#2a2e35" letter-spacing="-0.2">20:30</text>
<line x1="511.58" x2="511.58" y1="397" y2="534.7" stroke="#f0f0f1" stroke-width="0.8"/>
<text x="511.58" y="543.82" transform="rotate(0.03 511.58 543.82)" stroke="#2a2e35" stroke-width="0.16" text-anchor="middle" font-size="8.15" font-weight="400" fill="#2a2e35" letter-spacing="-0.2">20:35</text>
<line x1="552.62" x2="552.62" y1="397" y2="534.7" stroke="#f0f0f1" stroke-width="0.8"/>
<text x="552.62" y="543.82" transform="rotate(0.03 552.62 543.82)" stroke="#2a2e35" stroke-width="0.16" text-anchor="middle" font-size="8.15" font-weight="400" fill="#2a2e35" letter-spacing="-0.2">20:40</text>
<path d="M219.88 532.2 L223.98 429.97 L228.09 429.97 L232.19 410.32 L523.62 410.32 L527.72 496.59 L531.83 496.59 L535.93 532.2 L535.93 532.2 L219.88 532.2 Z" fill="rgba(86,166,75,0.19)" stroke="none"/>
<path d="M219.88 532.2 L223.98 429.97 L228.09 429.97 L232.19 410.32 L523.62 410.32 L527.72 496.59 L531.83 496.59 L535.93 532.2" fill="none" stroke="#56a64b" stroke-width="1.4" stroke-linejoin="round"/>
<path d="M193.2 532.2 L570 532.2" fill="none" stroke="#ec6a2b" stroke-width="1.4" stroke-linejoin="round"/>
<text x="424.25" y="379.58" transform="rotate(0.03 424.25 379.58)" stroke="#1f242b" stroke-width="0.1" text-anchor="middle" font-size="8.6" font-weight="700" fill="#1f242b" letter-spacing="-0.24">Read Throughput by Pod</text>
<rect x="578.25" y="396.6" width="8.5" height="2.7" rx="0.9" fill="#56a64b"/>
<text x="591.75" y="400.22" transform="rotate(0.03 591.75 400.22)" stroke="#2a2e35" stroke-width="0.16" text-anchor="start" font-size="8.15" font-weight="400" fill="#2a2e35" letter-spacing="-0.2">rdma-test-rdma-tools-6rq56</text>
<rect x="578.25" y="410.8" width="8.5" height="2.7" rx="0.9" fill="#e0b400"/>
<text x="591.75" y="414.42" transform="rotate(0.03 591.75 414.42)" stroke="#2a2e35" stroke-width="0.16" text-anchor="start" font-size="8.15" font-weight="400" fill="#2a2e35" letter-spacing="-0.2">rdma-test-rdma-tools-8hvgc</text>
<rect x="578.25" y="425" width="8.5" height="2.7" rx="0.9" fill="#5794f2"/>
<text x="591.75" y="428.62" transform="rotate(0.03 591.75 428.62)" stroke="#2a2e35" stroke-width="0.16" text-anchor="start" font-size="8.15" font-weight="400" fill="#2a2e35" letter-spacing="-0.2">rdma-test-rdma-tools-cgxqj</text>
<rect x="578.25" y="439.2" width="8.5" height="2.7" rx="0.9" fill="#ec6a2b"/>
<text x="591.75" y="442.82" transform="rotate(0.03 591.75 442.82)" stroke="#2a2e35" stroke-width="0.16" text-anchor="start" font-size="8.15" font-weight="400" fill="#2a2e35" letter-spacing="-0.2">rdma-test-rdma-tools-kfzt4</text>
<line x1="742.5" x2="1121.8" y1="532.2" y2="532.2" stroke="#f0f0f1" stroke-width="0.8"/>
<text x="739.25" y="534.22" transform="rotate(0.03 739.25 534.22)" stroke="#2a2e35" stroke-width="0.16" text-anchor="end" font-size="8.15" font-weight="400" fill="#2a2e35" letter-spacing="-0.2">0 b/s</text>
<line x1="742.5" x2="1121.8" y1="501.5" y2="501.5" stroke="#f0f0f1" stroke-width="0.8"/>
<text x="739.25" y="503.52" transform="rotate(0.03 739.25 503.52)" stroke="#2a2e35" stroke-width="0.16" text-anchor="end" font-size="8.15" font-weight="400" fill="#2a2e35" letter-spacing="-0.2">100 Gb/s</text>
<line x1="742.5" x2="1121.8" y1="470.8" y2="470.8" stroke="#f0f0f1" stroke-width="0.8"/>
<text x="739.25" y="472.82" transform="rotate(0.03 739.25 472.82)" stroke="#2a2e35" stroke-width="0.16" text-anchor="end" font-size="8.15" font-weight="400" fill="#2a2e35" letter-spacing="-0.2">200 Gb/s</text>
<line x1="742.5" x2="1121.8" y1="440.1" y2="440.1" stroke="#f0f0f1" stroke-width="0.8"/>
<text x="739.25" y="442.12" transform="rotate(0.03 739.25 442.12)" stroke="#2a2e35" stroke-width="0.16" text-anchor="end" font-size="8.15" font-weight="400" fill="#2a2e35" letter-spacing="-0.2">300 Gb/s</text>
<line x1="742.5" x2="1121.8" y1="409.4" y2="409.4" stroke="#f0f0f1" stroke-width="0.8"/>
<text x="739.25" y="411.42" transform="rotate(0.03 739.25 411.42)" stroke="#2a2e35" stroke-width="0.16" text-anchor="end" font-size="8.15" font-weight="400" fill="#2a2e35" letter-spacing="-0.2">400 Gb/s</text>
<line x1="776.06" x2="776.06" y1="397" y2="534.7" stroke="#f0f0f1" stroke-width="0.8"/>
<text x="776.06" y="543.82" transform="rotate(0.03 776.06 543.82)" stroke="#2a2e35" stroke-width="0.16" text-anchor="middle" font-size="8.15" font-weight="400" fill="#2a2e35" letter-spacing="-0.2">20:00</text>
<line x1="817.1" x2="817.1" y1="397" y2="534.7" stroke="#f0f0f1" stroke-width="0.8"/>
<text x="817.1" y="543.82" transform="rotate(0.03 817.1 543.82)" stroke="#2a2e35" stroke-width="0.16" text-anchor="middle" font-size="8.15" font-weight="400" fill="#2a2e35" letter-spacing="-0.2">20:05</text>
<line x1="858.15" x2="858.15" y1="397" y2="534.7" stroke="#f0f0f1" stroke-width="0.8"/>
<text x="858.15" y="543.82" transform="rotate(0.03 858.15 543.82)" stroke="#2a2e35" stroke-width="0.16" text-anchor="middle" font-size="8.15" font-weight="400" fill="#2a2e35" letter-spacing="-0.2">20:10</text>
<line x1="899.19" x2="899.19" y1="397" y2="534.7" stroke="#f0f0f1" stroke-width="0.8"/>
<text x="899.19" y="543.82" transform="rotate(0.03 899.19 543.82)" stroke="#2a2e35" stroke-width="0.16" text-anchor="middle" font-size="8.15" font-weight="400" fill="#2a2e35" letter-spacing="-0.2">20:15</text>
<line x1="940.24" x2="940.24" y1="397" y2="534.7" stroke="#f0f0f1" stroke-width="0.8"/>
<text x="940.24" y="543.82" transform="rotate(0.03 940.24 543.82)" stroke="#2a2e35" stroke-width="0.16" text-anchor="middle" font-size="8.15" font-weight="400" fill="#2a2e35" letter-spacing="-0.2">20:20</text>
<line x1="981.28" x2="981.28" y1="397" y2="534.7" stroke="#f0f0f1" stroke-width="0.8"/>
<text x="981.28" y="543.82" transform="rotate(0.03 981.28 543.82)" stroke="#2a2e35" stroke-width="0.16" text-anchor="middle" font-size="8.15" font-weight="400" fill="#2a2e35" letter-spacing="-0.2">20:25</text>
<line x1="1022.33" x2="1022.33" y1="397" y2="534.7" stroke="#f0f0f1" stroke-width="0.8"/>
<text x="1022.33" y="543.82" transform="rotate(0.03 1022.33 543.82)" stroke="#2a2e35" stroke-width="0.16" text-anchor="middle" font-size="8.15" font-weight="400" fill="#2a2e35" letter-spacing="-0.2">20:30</text>
<line x1="1063.38" x2="1063.38" y1="397" y2="534.7" stroke="#f0f0f1" stroke-width="0.8"/>
<text x="1063.38" y="543.82" transform="rotate(0.03 1063.38 543.82)" stroke="#2a2e35" stroke-width="0.16" text-anchor="middle" font-size="8.15" font-weight="400" fill="#2a2e35" letter-spacing="-0.2">20:35</text>
<line x1="1104.42" x2="1104.42" y1="397" y2="534.7" stroke="#f0f0f1" stroke-width="0.8"/>
<text x="1104.42" y="543.82" transform="rotate(0.03 1104.42 543.82)" stroke="#2a2e35" stroke-width="0.16" text-anchor="middle" font-size="8.15" font-weight="400" fill="#2a2e35" letter-spacing="-0.2">20:40</text>
<path d="M771.68 532.2 L775.78 428.74 L779.89 428.74 L783.99 410.32 L1075.42 410.32 L1079.52 497.51 L1083.63 497.51 L1087.73 532.2 L1087.73 532.2 L771.68 532.2 Z" fill="rgba(224,180,0,0.17)" stroke="none"/>
<path d="M771.68 532.2 L775.78 428.74 L779.89 428.74 L783.99 410.32 L1075.42 410.32 L1079.52 497.51 L1083.63 497.51 L1087.73 532.2" fill="none" stroke="#e0b400" stroke-width="1.4" stroke-linejoin="round"/>
<path d="M745 532.2 L1121.8 532.2" fill="none" stroke="#ec6a2b" stroke-width="1.4" stroke-linejoin="round"/>
<text x="976.45" y="379.58" transform="rotate(0.03 976.45 379.58)" stroke="#1f242b" stroke-width="0.1" text-anchor="middle" font-size="8.6" font-weight="700" fill="#1f242b" letter-spacing="-0.24">Write Throughput by Pod</text>
<rect x="1130.25" y="396.6" width="8.5" height="2.7" rx="0.9" fill="#56a64b"/>
<text x="1143.75" y="400.22" transform="rotate(0.03 1143.75 400.22)" stroke="#2a2e35" stroke-width="0.16" text-anchor="start" font-size="8.15" font-weight="400" fill="#2a2e35" letter-spacing="-0.2">rdma-test-rdma-tools-6rq56</text>
<rect x="1130.25" y="410.8" width="8.5" height="2.7" rx="0.9" fill="#e0b400"/>
<text x="1143.75" y="414.42" transform="rotate(0.03 1143.75 414.42)" stroke="#2a2e35" stroke-width="0.16" text-anchor="start" font-size="8.15" font-weight="400" fill="#2a2e35" letter-spacing="-0.2">rdma-test-rdma-tools-8hvgc</text>
<rect x="1130.25" y="425" width="8.5" height="2.7" rx="0.9" fill="#5794f2"/>
<text x="1143.75" y="428.62" transform="rotate(0.03 1143.75 428.62)" stroke="#2a2e35" stroke-width="0.16" text-anchor="start" font-size="8.15" font-weight="400" fill="#2a2e35" letter-spacing="-0.2">rdma-test-rdma-tools-cgxqj</text>
<rect x="1130.25" y="439.2" width="8.5" height="2.7" rx="0.9" fill="#ec6a2b"/>
<text x="1143.75" y="442.82" transform="rotate(0.03 1143.75 442.82)" stroke="#2a2e35" stroke-width="0.16" text-anchor="start" font-size="8.15" font-weight="400" fill="#2a2e35" letter-spacing="-0.2">rdma-test-rdma-tools-kfzt4</text>
<line x1="194" x2="411.6" y1="695.75" y2="695.75" stroke="#f0f0f1" stroke-width="0.8"/>
<text x="190.5" y="698.17" transform="rotate(0.03 190.5 698.17)" stroke="#2a2e35" stroke-width="0.16" text-anchor="end" font-size="8.15" font-weight="400" fill="#2a2e35" letter-spacing="-0.2">0 p/s</text>
<line x1="194" x2="411.6" y1="676.7" y2="676.7" stroke="#f0f0f1" stroke-width="0.8"/>
<text x="190.5" y="679.12" transform="rotate(0.03 190.5 679.12)" stroke="#2a2e35" stroke-width="0.16" text-anchor="end" font-size="8.15" font-weight="400" fill="#2a2e35" letter-spacing="-0.2">2.50 Mp/s</text>
<line x1="194" x2="411.6" y1="657.65" y2="657.65" stroke="#f0f0f1" stroke-width="0.8"/>
<text x="190.5" y="660.07" transform="rotate(0.03 190.5 660.07)" stroke="#2a2e35" stroke-width="0.16" text-anchor="end" font-size="8.15" font-weight="400" fill="#2a2e35" letter-spacing="-0.2">5 Mp/s</text>
<line x1="194" x2="411.6" y1="638.6" y2="638.6" stroke="#f0f0f1" stroke-width="0.8"/>
<text x="190.5" y="641.02" transform="rotate(0.03 190.5 641.02)" stroke="#2a2e35" stroke-width="0.16" text-anchor="end" font-size="8.15" font-weight="400" fill="#2a2e35" letter-spacing="-0.2">7.50 Mp/s</text>
<line x1="194" x2="411.6" y1="619.55" y2="619.55" stroke="#f0f0f1" stroke-width="0.8"/>
<text x="190.5" y="621.97" transform="rotate(0.03 190.5 621.97)" stroke="#2a2e35" stroke-width="0.16" text-anchor="end" font-size="8.15" font-weight="400" fill="#2a2e35" letter-spacing="-0.2">10 Mp/s</text>
<line x1="194" x2="411.6" y1="600.5" y2="600.5" stroke="#f0f0f1" stroke-width="0.8"/>
<text x="190.5" y="602.92" transform="rotate(0.03 190.5 602.92)" stroke="#2a2e35" stroke-width="0.16" text-anchor="end" font-size="8.15" font-weight="400" fill="#2a2e35" letter-spacing="-0.2">12.5 Mp/s</text>
<line x1="214.23" x2="214.23" y1="589.5" y2="698.25" stroke="#f0f0f1" stroke-width="0.8"/>
<text x="214.23" y="707.32" transform="rotate(0.03 214.23 707.32)" stroke="#2a2e35" stroke-width="0.16" text-anchor="middle" font-size="8.15" font-weight="400" fill="#2a2e35" letter-spacing="-0.2">20:00</text>
<line x1="261.09" x2="261.09" y1="589.5" y2="698.25" stroke="#f0f0f1" stroke-width="0.8"/>
<text x="261.09" y="707.32" transform="rotate(0.03 261.09 707.32)" stroke="#2a2e35" stroke-width="0.16" text-anchor="middle" font-size="8.15" font-weight="400" fill="#2a2e35" letter-spacing="-0.2">20:10</text>
<line x1="307.95" x2="307.95" y1="589.5" y2="698.25" stroke="#f0f0f1" stroke-width="0.8"/>
<text x="307.95" y="707.32" transform="rotate(0.03 307.95 707.32)" stroke="#2a2e35" stroke-width="0.16" text-anchor="middle" font-size="8.15" font-weight="400" fill="#2a2e35" letter-spacing="-0.2">20:20</text>
<line x1="354.82" x2="354.82" y1="589.5" y2="698.25" stroke="#f0f0f1" stroke-width="0.8"/>
<text x="354.82" y="707.32" transform="rotate(0.03 354.82 707.32)" stroke="#2a2e35" stroke-width="0.16" text-anchor="middle" font-size="8.15" font-weight="400" fill="#2a2e35" letter-spacing="-0.2">20:30</text>
<line x1="401.68" x2="401.68" y1="589.5" y2="698.25" stroke="#f0f0f1" stroke-width="0.8"/>
<text x="401.68" y="707.32" transform="rotate(0.03 401.68 707.32)" stroke="#2a2e35" stroke-width="0.16" text-anchor="middle" font-size="8.15" font-weight="400" fill="#2a2e35" letter-spacing="-0.2">20:40</text>
<path d="M211.73 695.75 L214.07 619.55 L216.42 619.55 L218.76 604.69 L385.12 604.69 L387.47 668.32 L389.81 668.32 L392.15 695.75 L392.15 695.75 L211.73 695.75 Z" fill="rgba(86,166,75,0.19)" stroke="none"/>
<path d="M211.73 695.75 L214.07 619.55 L216.42 619.55 L218.76 604.69 L385.12 604.69 L387.47 668.32 L389.81 668.32 L392.15 695.75" fill="none" stroke="#56a64b" stroke-width="1.4" stroke-linejoin="round"/>
<path d="M211.73 695.75 L214.07 690.49 L216.42 690.49 L218.76 689.43 L385.12 689.43 L387.47 693.85 L389.81 694.07 L392.15 695.75 L392.15 695.75 L211.73 695.75 Z" fill="rgba(224,180,0,0.17)" stroke="none"/>
<path d="M211.73 695.75 L214.07 690.49 L216.42 690.49 L218.76 689.43 L385.12 689.43 L387.47 693.85 L389.81 694.07 L392.15 695.75" fill="none" stroke="#e0b400" stroke-width="1.3" stroke-linejoin="round"/>
<path d="M196.5 695.75 L411.6 695.75" fill="none" stroke="#ec6a2b" stroke-width="1.4" stroke-linejoin="round"/>
<text x="286.45" y="572.18" transform="rotate(0.03 286.45 572.18)" stroke="#1f242b" stroke-width="0.1" text-anchor="middle" font-size="8.6" font-weight="700" fill="#1f242b" letter-spacing="-0.24">Unicast Read Packets</text>
<rect x="159.25" y="715.95" width="8.5" height="2.7" rx="0.9" fill="#56a64b"/>
<text x="172.75" y="719.57" transform="rotate(0.03 172.75 719.57)" stroke="#2a2e35" stroke-width="0.16" text-anchor="start" font-size="8.15" font-weight="400" fill="#2a2e35" letter-spacing="-0.2">rdma-test-rdma-tools-6rq56</text>
<rect x="272.75" y="715.95" width="8.5" height="2.7" rx="0.9" fill="#e0b400"/>
<text x="286.25" y="719.57" transform="rotate(0.03 286.25 719.57)" stroke="#2a2e35" stroke-width="0.16" text-anchor="start" font-size="8.15" font-weight="400" fill="#2a2e35" letter-spacing="-0.2">rdma-test-rdma-tools-8hvgc</text>
<rect x="159.25" y="730.15" width="8.5" height="2.7" rx="0.9" fill="#5794f2"/>
<text x="172.75" y="733.77" transform="rotate(0.03 172.75 733.77)" stroke="#2a2e35" stroke-width="0.16" text-anchor="start" font-size="8.15" font-weight="400" fill="#2a2e35" letter-spacing="-0.2">rdma-test-rdma-tools-cgxqj</text>
<rect x="271.05" y="730.15" width="8.5" height="2.7" rx="0.9" fill="#ec6a2b"/>
<text x="284.55" y="733.77" transform="rotate(0.03 284.55 733.77)" stroke="#2a2e35" stroke-width="0.16" text-anchor="start" font-size="8.15" font-weight="400" fill="#2a2e35" letter-spacing="-0.2">rdma-test-rdma-tools-kfzt4</text>
<line x1="470.17" x2="687.77" y1="695.75" y2="695.75" stroke="#f0f0f1" stroke-width="0.8"/>
<text x="466.67" y="698.17" transform="rotate(0.03 466.67 698.17)" stroke="#2a2e35" stroke-width="0.16" text-anchor="end" font-size="8.15" font-weight="400" fill="#2a2e35" letter-spacing="-0.2">0 p/s</text>
<line x1="470.17" x2="687.77" y1="676.7" y2="676.7" stroke="#f0f0f1" stroke-width="0.8"/>
<text x="466.67" y="679.12" transform="rotate(0.03 466.67 679.12)" stroke="#2a2e35" stroke-width="0.16" text-anchor="end" font-size="8.15" font-weight="400" fill="#2a2e35" letter-spacing="-0.2">2.50 Mp/s</text>
<line x1="470.17" x2="687.77" y1="657.65" y2="657.65" stroke="#f0f0f1" stroke-width="0.8"/>
<text x="466.67" y="660.07" transform="rotate(0.03 466.67 660.07)" stroke="#2a2e35" stroke-width="0.16" text-anchor="end" font-size="8.15" font-weight="400" fill="#2a2e35" letter-spacing="-0.2">5 Mp/s</text>
<line x1="470.17" x2="687.77" y1="638.6" y2="638.6" stroke="#f0f0f1" stroke-width="0.8"/>
<text x="466.67" y="641.02" transform="rotate(0.03 466.67 641.02)" stroke="#2a2e35" stroke-width="0.16" text-anchor="end" font-size="8.15" font-weight="400" fill="#2a2e35" letter-spacing="-0.2">7.50 Mp/s</text>
<line x1="470.17" x2="687.77" y1="619.55" y2="619.55" stroke="#f0f0f1" stroke-width="0.8"/>
<text x="466.67" y="621.97" transform="rotate(0.03 466.67 621.97)" stroke="#2a2e35" stroke-width="0.16" text-anchor="end" font-size="8.15" font-weight="400" fill="#2a2e35" letter-spacing="-0.2">10 Mp/s</text>
<line x1="470.17" x2="687.77" y1="600.5" y2="600.5" stroke="#f0f0f1" stroke-width="0.8"/>
<text x="466.67" y="602.92" transform="rotate(0.03 466.67 602.92)" stroke="#2a2e35" stroke-width="0.16" text-anchor="end" font-size="8.15" font-weight="400" fill="#2a2e35" letter-spacing="-0.2">12.5 Mp/s</text>
<line x1="490.4" x2="490.4" y1="589.5" y2="698.25" stroke="#f0f0f1" stroke-width="0.8"/>
<text x="490.4" y="707.32" transform="rotate(0.03 490.4 707.32)" stroke="#2a2e35" stroke-width="0.16" text-anchor="middle" font-size="8.15" font-weight="400" fill="#2a2e35" letter-spacing="-0.2">20:00</text>
<line x1="537.26" x2="537.26" y1="589.5" y2="698.25" stroke="#f0f0f1" stroke-width="0.8"/>
<text x="537.26" y="707.32" transform="rotate(0.03 537.26 707.32)" stroke="#2a2e35" stroke-width="0.16" text-anchor="middle" font-size="8.15" font-weight="400" fill="#2a2e35" letter-spacing="-0.2">20:10</text>
<line x1="584.12" x2="584.12" y1="589.5" y2="698.25" stroke="#f0f0f1" stroke-width="0.8"/>
<text x="584.12" y="707.32" transform="rotate(0.03 584.12 707.32)" stroke="#2a2e35" stroke-width="0.16" text-anchor="middle" font-size="8.15" font-weight="400" fill="#2a2e35" letter-spacing="-0.2">20:20</text>
<line x1="630.99" x2="630.99" y1="589.5" y2="698.25" stroke="#f0f0f1" stroke-width="0.8"/>
<text x="630.99" y="707.32" transform="rotate(0.03 630.99 707.32)" stroke="#2a2e35" stroke-width="0.16" text-anchor="middle" font-size="8.15" font-weight="400" fill="#2a2e35" letter-spacing="-0.2">20:30</text>
<line x1="677.85" x2="677.85" y1="589.5" y2="698.25" stroke="#f0f0f1" stroke-width="0.8"/>
<text x="677.85" y="707.32" transform="rotate(0.03 677.85 707.32)" stroke="#2a2e35" stroke-width="0.16" text-anchor="middle" font-size="8.15" font-weight="400" fill="#2a2e35" letter-spacing="-0.2">20:40</text>
<path d="M487.9 695.75 L490.24 619.55 L492.59 619.55 L494.93 604.69 L661.29 604.69 L663.64 668.32 L665.98 668.32 L668.32 695.75 L668.32 695.75 L487.9 695.75 Z" fill="rgba(224,180,0,0.17)" stroke="none"/>
<path d="M487.9 695.75 L490.24 619.55 L492.59 619.55 L494.93 604.69 L661.29 604.69 L663.64 668.32 L665.98 668.32 L668.32 695.75" fill="none" stroke="#e0b400" stroke-width="1.4" stroke-linejoin="round"/>
<path d="M487.9 695.75 L490.24 690.49 L492.59 690.49 L494.93 689.43 L661.29 689.43 L663.64 693.85 L665.98 694.07 L668.32 695.75 L668.32 695.75 L487.9 695.75 Z" fill="rgba(86,166,75,0.19)" stroke="none"/>
<path d="M487.9 695.75 L490.24 690.49 L492.59 690.49 L494.93 689.43 L661.29 689.43 L663.64 693.85 L665.98 694.07 L668.32 695.75" fill="none" stroke="#56a64b" stroke-width="1.3" stroke-linejoin="round"/>
<path d="M472.67 695.75 L687.77 695.75" fill="none" stroke="#ec6a2b" stroke-width="1.4" stroke-linejoin="round"/>
<text x="562.62" y="572.18" transform="rotate(0.03 562.62 572.18)" stroke="#1f242b" stroke-width="0.1" text-anchor="middle" font-size="8.6" font-weight="700" fill="#1f242b" letter-spacing="-0.24">Unicast Written Packets</text>
<rect x="435.42" y="715.95" width="8.5" height="2.7" rx="0.9" fill="#56a64b"/>
<text x="448.92" y="719.57" transform="rotate(0.03 448.92 719.57)" stroke="#2a2e35" stroke-width="0.16" text-anchor="start" font-size="8.15" font-weight="400" fill="#2a2e35" letter-spacing="-0.2">rdma-test-rdma-tools-6rq56</text>
<rect x="548.92" y="715.95" width="8.5" height="2.7" rx="0.9" fill="#e0b400"/>
<text x="562.42" y="719.57" transform="rotate(0.03 562.42 719.57)" stroke="#2a2e35" stroke-width="0.16" text-anchor="start" font-size="8.15" font-weight="400" fill="#2a2e35" letter-spacing="-0.2">rdma-test-rdma-tools-8hvgc</text>
<rect x="435.42" y="730.15" width="8.5" height="2.7" rx="0.9" fill="#5794f2"/>
<text x="448.92" y="733.77" transform="rotate(0.03 448.92 733.77)" stroke="#2a2e35" stroke-width="0.16" text-anchor="start" font-size="8.15" font-weight="400" fill="#2a2e35" letter-spacing="-0.2">rdma-test-rdma-tools-cgxqj</text>
<rect x="547.22" y="730.15" width="8.5" height="2.7" rx="0.9" fill="#ec6a2b"/>
<text x="560.72" y="733.77" transform="rotate(0.03 560.72 733.77)" stroke="#2a2e35" stroke-width="0.16" text-anchor="start" font-size="8.15" font-weight="400" fill="#2a2e35" letter-spacing="-0.2">rdma-test-rdma-tools-kfzt4</text>
<line x1="737.8" x2="963.7" y1="695.75" y2="695.75" stroke="#f0f0f1" stroke-width="0.8"/>
<text x="734.5" y="698.17" transform="rotate(0.03 734.5 698.17)" stroke="#2a2e35" stroke-width="0.16" text-anchor="end" font-size="8.15" font-weight="400" fill="#2a2e35" letter-spacing="-0.2">0 p/s</text>
<line x1="737.8" x2="963.7" y1="674.48" y2="674.48" stroke="#f0f0f1" stroke-width="0.8"/>
<text x="734.5" y="676.9" transform="rotate(0.03 734.5 676.9)" stroke="#2a2e35" stroke-width="0.16" text-anchor="end" font-size="8.15" font-weight="400" fill="#2a2e35" letter-spacing="-0.2">20 p/s</text>
<line x1="737.8" x2="963.7" y1="653.21" y2="653.21" stroke="#f0f0f1" stroke-width="0.8"/>
<text x="734.5" y="655.63" transform="rotate(0.03 734.5 655.63)" stroke="#2a2e35" stroke-width="0.16" text-anchor="end" font-size="8.15" font-weight="400" fill="#2a2e35" letter-spacing="-0.2">40 p/s</text>
<line x1="737.8" x2="963.7" y1="631.94" y2="631.94" stroke="#f0f0f1" stroke-width="0.8"/>
<text x="734.5" y="634.36" transform="rotate(0.03 734.5 634.36)" stroke="#2a2e35" stroke-width="0.16" text-anchor="end" font-size="8.15" font-weight="400" fill="#2a2e35" letter-spacing="-0.2">60 p/s</text>
<line x1="737.8" x2="963.7" y1="610.67" y2="610.67" stroke="#f0f0f1" stroke-width="0.8"/>
<text x="734.5" y="613.09" transform="rotate(0.03 734.5 613.09)" stroke="#2a2e35" stroke-width="0.16" text-anchor="end" font-size="8.15" font-weight="400" fill="#2a2e35" letter-spacing="-0.2">80 p/s</text>
<line x1="737.8" x2="963.7" y1="589.4" y2="589.4" stroke="#f0f0f1" stroke-width="0.8"/>
<text x="734.5" y="591.82" transform="rotate(0.03 734.5 591.82)" stroke="#2a2e35" stroke-width="0.16" text-anchor="end" font-size="8.15" font-weight="400" fill="#2a2e35" letter-spacing="-0.2">100 p/s</text>
<line x1="758.71" x2="758.71" y1="589.5" y2="698.25" stroke="#f0f0f1" stroke-width="0.8"/>
<text x="758.71" y="707.32" transform="rotate(0.03 758.71 707.32)" stroke="#2a2e35" stroke-width="0.16" text-anchor="middle" font-size="8.15" font-weight="400" fill="#2a2e35" letter-spacing="-0.2">20:00</text>
<line x1="807.38" x2="807.38" y1="589.5" y2="698.25" stroke="#f0f0f1" stroke-width="0.8"/>
<text x="807.38" y="707.32" transform="rotate(0.03 807.38 707.32)" stroke="#2a2e35" stroke-width="0.16" text-anchor="middle" font-size="8.15" font-weight="400" fill="#2a2e35" letter-spacing="-0.2">20:10</text>
<line x1="856.05" x2="856.05" y1="589.5" y2="698.25" stroke="#f0f0f1" stroke-width="0.8"/>
<text x="856.05" y="707.32" transform="rotate(0.03 856.05 707.32)" stroke="#2a2e35" stroke-width="0.16" text-anchor="middle" font-size="8.15" font-weight="400" fill="#2a2e35" letter-spacing="-0.2">20:20</text>
<line x1="904.73" x2="904.73" y1="589.5" y2="698.25" stroke="#f0f0f1" stroke-width="0.8"/>
<text x="904.73" y="707.32" transform="rotate(0.03 904.73 707.32)" stroke="#2a2e35" stroke-width="0.16" text-anchor="middle" font-size="8.15" font-weight="400" fill="#2a2e35" letter-spacing="-0.2">20:30</text>
<line x1="953.4" x2="953.4" y1="589.5" y2="698.25" stroke="#f0f0f1" stroke-width="0.8"/>
<text x="953.4" y="707.32" transform="rotate(0.03 953.4 707.32)" stroke="#2a2e35" stroke-width="0.16" text-anchor="middle" font-size="8.15" font-weight="400" fill="#2a2e35" letter-spacing="-0.2">20:40</text>
<path d="M740.3 695.75 L963.7 695.75" fill="none" stroke="#ec6a2b" stroke-width="1.4" stroke-linejoin="round"/>
<text x="838.79" y="572.18" transform="rotate(0.03 838.79 572.18)" stroke="#1f242b" stroke-width="0.1" text-anchor="middle" font-size="8.6" font-weight="700" fill="#1f242b" letter-spacing="-0.24">Multicast Read Packets</text>
<rect x="711.59" y="715.95" width="8.5" height="2.7" rx="0.9" fill="#56a64b"/>
<text x="725.09" y="719.57" transform="rotate(0.03 725.09 719.57)" stroke="#2a2e35" stroke-width="0.16" text-anchor="start" font-size="8.15" font-weight="400" fill="#2a2e35" letter-spacing="-0.2">rdma-test-rdma-tools-6rq56</text>
<rect x="825.09" y="715.95" width="8.5" height="2.7" rx="0.9" fill="#e0b400"/>
<text x="838.59" y="719.57" transform="rotate(0.03 838.59 719.57)" stroke="#2a2e35" stroke-width="0.16" text-anchor="start" font-size="8.15" font-weight="400" fill="#2a2e35" letter-spacing="-0.2">rdma-test-rdma-tools-8hvgc</text>
<rect x="711.59" y="730.15" width="8.5" height="2.7" rx="0.9" fill="#5794f2"/>
<text x="725.09" y="733.77" transform="rotate(0.03 725.09 733.77)" stroke="#2a2e35" stroke-width="0.16" text-anchor="start" font-size="8.15" font-weight="400" fill="#2a2e35" letter-spacing="-0.2">rdma-test-rdma-tools-cgxqj</text>
<rect x="823.39" y="730.15" width="8.5" height="2.7" rx="0.9" fill="#ec6a2b"/>
<text x="836.89" y="733.77" transform="rotate(0.03 836.89 733.77)" stroke="#2a2e35" stroke-width="0.16" text-anchor="start" font-size="8.15" font-weight="400" fill="#2a2e35" letter-spacing="-0.2">rdma-test-rdma-tools-kfzt4</text>
<line x1="1013.97" x2="1239.87" y1="695.75" y2="695.75" stroke="#f0f0f1" stroke-width="0.8"/>
<text x="1010.8" y="698.17" transform="rotate(0.03 1010.8 698.17)" stroke="#2a2e35" stroke-width="0.16" text-anchor="end" font-size="8.15" font-weight="400" fill="#2a2e35" letter-spacing="-0.2">0 p/s</text>
<line x1="1013.97" x2="1239.87" y1="674.48" y2="674.48" stroke="#f0f0f1" stroke-width="0.8"/>
<text x="1010.8" y="676.9" transform="rotate(0.03 1010.8 676.9)" stroke="#2a2e35" stroke-width="0.16" text-anchor="end" font-size="8.15" font-weight="400" fill="#2a2e35" letter-spacing="-0.2">20 p/s</text>
<line x1="1013.97" x2="1239.87" y1="653.21" y2="653.21" stroke="#f0f0f1" stroke-width="0.8"/>
<text x="1010.8" y="655.63" transform="rotate(0.03 1010.8 655.63)" stroke="#2a2e35" stroke-width="0.16" text-anchor="end" font-size="8.15" font-weight="400" fill="#2a2e35" letter-spacing="-0.2">40 p/s</text>
<line x1="1013.97" x2="1239.87" y1="631.94" y2="631.94" stroke="#f0f0f1" stroke-width="0.8"/>
<text x="1010.8" y="634.36" transform="rotate(0.03 1010.8 634.36)" stroke="#2a2e35" stroke-width="0.16" text-anchor="end" font-size="8.15" font-weight="400" fill="#2a2e35" letter-spacing="-0.2">60 p/s</text>
<line x1="1013.97" x2="1239.87" y1="610.67" y2="610.67" stroke="#f0f0f1" stroke-width="0.8"/>
<text x="1010.8" y="613.09" transform="rotate(0.03 1010.8 613.09)" stroke="#2a2e35" stroke-width="0.16" text-anchor="end" font-size="8.15" font-weight="400" fill="#2a2e35" letter-spacing="-0.2">80 p/s</text>
<line x1="1013.97" x2="1239.87" y1="589.4" y2="589.4" stroke="#f0f0f1" stroke-width="0.8"/>
<text x="1010.8" y="591.82" transform="rotate(0.03 1010.8 591.82)" stroke="#2a2e35" stroke-width="0.16" text-anchor="end" font-size="8.15" font-weight="400" fill="#2a2e35" letter-spacing="-0.2">100 p/s</text>
<line x1="1034.88" x2="1034.88" y1="589.5" y2="698.25" stroke="#f0f0f1" stroke-width="0.8"/>
<text x="1034.88" y="707.32" transform="rotate(0.03 1034.88 707.32)" stroke="#2a2e35" stroke-width="0.16" text-anchor="middle" font-size="8.15" font-weight="400" fill="#2a2e35" letter-spacing="-0.2">20:00</text>
<line x1="1083.55" x2="1083.55" y1="589.5" y2="698.25" stroke="#f0f0f1" stroke-width="0.8"/>
<text x="1083.55" y="707.32" transform="rotate(0.03 1083.55 707.32)" stroke="#2a2e35" stroke-width="0.16" text-anchor="middle" font-size="8.15" font-weight="400" fill="#2a2e35" letter-spacing="-0.2">20:10</text>
<line x1="1132.22" x2="1132.22" y1="589.5" y2="698.25" stroke="#f0f0f1" stroke-width="0.8"/>
<text x="1132.22" y="707.32" transform="rotate(0.03 1132.22 707.32)" stroke="#2a2e35" stroke-width="0.16" text-anchor="middle" font-size="8.15" font-weight="400" fill="#2a2e35" letter-spacing="-0.2">20:20</text>
<line x1="1180.9" x2="1180.9" y1="589.5" y2="698.25" stroke="#f0f0f1" stroke-width="0.8"/>
<text x="1180.9" y="707.32" transform="rotate(0.03 1180.9 707.32)" stroke="#2a2e35" stroke-width="0.16" text-anchor="middle" font-size="8.15" font-weight="400" fill="#2a2e35" letter-spacing="-0.2">20:30</text>
<line x1="1229.57" x2="1229.57" y1="589.5" y2="698.25" stroke="#f0f0f1" stroke-width="0.8"/>
<text x="1229.57" y="707.32" transform="rotate(0.03 1229.57 707.32)" stroke="#2a2e35" stroke-width="0.16" text-anchor="middle" font-size="8.15" font-weight="400" fill="#2a2e35" letter-spacing="-0.2">20:40</text>
<path d="M1016.47 695.75 L1239.87 695.75" fill="none" stroke="#ec6a2b" stroke-width="1.4" stroke-linejoin="round"/>
<text x="1114.96" y="572.18" transform="rotate(0.03 1114.96 572.18)" stroke="#1f242b" stroke-width="0.1" text-anchor="middle" font-size="8.6" font-weight="700" fill="#1f242b" letter-spacing="-0.24">Multicast Written Packets</text>
<rect x="987.76" y="715.95" width="8.5" height="2.7" rx="0.9" fill="#56a64b"/>
<text x="1001.26" y="719.57" transform="rotate(0.03 1001.26 719.57)" stroke="#2a2e35" stroke-width="0.16" text-anchor="start" font-size="8.15" font-weight="400" fill="#2a2e35" letter-spacing="-0.2">rdma-test-rdma-tools-6rq56</text>
<rect x="1101.26" y="715.95" width="8.5" height="2.7" rx="0.9" fill="#e0b400"/>
<text x="1114.76" y="719.57" transform="rotate(0.03 1114.76 719.57)" stroke="#2a2e35" stroke-width="0.16" text-anchor="start" font-size="8.15" font-weight="400" fill="#2a2e35" letter-spacing="-0.2">rdma-test-rdma-tools-8hvgc</text>
<rect x="987.76" y="730.15" width="8.5" height="2.7" rx="0.9" fill="#5794f2"/>
<text x="1001.26" y="733.77" transform="rotate(0.03 1001.26 733.77)" stroke="#2a2e35" stroke-width="0.16" text-anchor="start" font-size="8.15" font-weight="400" fill="#2a2e35" letter-spacing="-0.2">rdma-test-rdma-tools-cgxqj</text>
<rect x="1099.56" y="730.15" width="8.5" height="2.7" rx="0.9" fill="#ec6a2b"/>
<text x="1113.06" y="733.77" transform="rotate(0.03 1113.06 733.77)" stroke="#2a2e35" stroke-width="0.16" text-anchor="start" font-size="8.15" font-weight="400" fill="#2a2e35" letter-spacing="-0.2">rdma-test-rdma-tools-kfzt4</text>
<line x1="172.8" x2="514.2" y1="913.9" y2="913.9" stroke="#f0f0f1" stroke-width="0.8"/>
<text x="169.5" y="915.87" transform="rotate(0.03 169.5 915.87)" stroke="#2a2e35" stroke-width="0.16" text-anchor="end" font-size="8.15" font-weight="400" fill="#2a2e35" letter-spacing="-0.2">0</text>
<line x1="172.8" x2="514.2" y1="886.9" y2="886.9" stroke="#f0f0f1" stroke-width="0.8"/>
<text x="169.5" y="888.87" transform="rotate(0.03 169.5 888.87)" stroke="#2a2e35" stroke-width="0.16" text-anchor="end" font-size="8.15" font-weight="400" fill="#2a2e35" letter-spacing="-0.2">20</text>
<line x1="172.8" x2="514.2" y1="859.9" y2="859.9" stroke="#f0f0f1" stroke-width="0.8"/>
<text x="169.5" y="861.87" transform="rotate(0.03 169.5 861.87)" stroke="#2a2e35" stroke-width="0.16" text-anchor="end" font-size="8.15" font-weight="400" fill="#2a2e35" letter-spacing="-0.2">40</text>
<line x1="172.8" x2="514.2" y1="832.9" y2="832.9" stroke="#f0f0f1" stroke-width="0.8"/>
<text x="169.5" y="834.87" transform="rotate(0.03 169.5 834.87)" stroke="#2a2e35" stroke-width="0.16" text-anchor="end" font-size="8.15" font-weight="400" fill="#2a2e35" letter-spacing="-0.2">60</text>
<line x1="172.8" x2="514.2" y1="805.9" y2="805.9" stroke="#f0f0f1" stroke-width="0.8"/>
<text x="169.5" y="807.87" transform="rotate(0.03 169.5 807.87)" stroke="#2a2e35" stroke-width="0.16" text-anchor="end" font-size="8.15" font-weight="400" fill="#2a2e35" letter-spacing="-0.2">80</text>
<line x1="172.8" x2="514.2" y1="778.9" y2="778.9" stroke="#f0f0f1" stroke-width="0.8"/>
<text x="169.5" y="780.87" transform="rotate(0.03 169.5 780.87)" stroke="#2a2e35" stroke-width="0.16" text-anchor="end" font-size="8.15" font-weight="400" fill="#2a2e35" letter-spacing="-0.2">100</text>
<line x1="203.23" x2="203.23" y1="778.9" y2="916.4" stroke="#f0f0f1" stroke-width="0.8"/>
<text x="203.23" y="925.52" transform="rotate(0.03 203.23 925.52)" stroke="#2a2e35" stroke-width="0.16" text-anchor="middle" font-size="8.15" font-weight="400" fill="#2a2e35" letter-spacing="-0.2">20:00</text>
<line x1="240.15" x2="240.15" y1="778.9" y2="916.4" stroke="#f0f0f1" stroke-width="0.8"/>
<text x="240.15" y="925.52" transform="rotate(0.03 240.15 925.52)" stroke="#2a2e35" stroke-width="0.16" text-anchor="middle" font-size="8.15" font-weight="400" fill="#2a2e35" letter-spacing="-0.2">20:05</text>
<line x1="277.07" x2="277.07" y1="778.9" y2="916.4" stroke="#f0f0f1" stroke-width="0.8"/>
<text x="277.07" y="925.52" transform="rotate(0.03 277.07 925.52)" stroke="#2a2e35" stroke-width="0.16" text-anchor="middle" font-size="8.15" font-weight="400" fill="#2a2e35" letter-spacing="-0.2">20:10</text>
<line x1="313.98" x2="313.98" y1="778.9" y2="916.4" stroke="#f0f0f1" stroke-width="0.8"/>
<text x="313.98" y="925.52" transform="rotate(0.03 313.98 925.52)" stroke="#2a2e35" stroke-width="0.16" text-anchor="middle" font-size="8.15" font-weight="400" fill="#2a2e35" letter-spacing="-0.2">20:15</text>
<line x1="350.9" x2="350.9" y1="778.9" y2="916.4" stroke="#f0f0f1" stroke-width="0.8"/>
<text x="350.9" y="925.52" transform="rotate(0.03 350.9 925.52)" stroke="#2a2e35" stroke-width="0.16" text-anchor="middle" font-size="8.15" font-weight="400" fill="#2a2e35" letter-spacing="-0.2">20:20</text>
<line x1="387.82" x2="387.82" y1="778.9" y2="916.4" stroke="#f0f0f1" stroke-width="0.8"/>
<text x="387.82" y="925.52" transform="rotate(0.03 387.82 925.52)" stroke="#2a2e35" stroke-width="0.16" text-anchor="middle" font-size="8.15" font-weight="400" fill="#2a2e35" letter-spacing="-0.2">20:25</text>
<line x1="424.73" x2="424.73" y1="778.9" y2="916.4" stroke="#f0f0f1" stroke-width="0.8"/>
<text x="424.73" y="925.52" transform="rotate(0.03 424.73 925.52)" stroke="#2a2e35" stroke-width="0.16" text-anchor="middle" font-size="8.15" font-weight="400" fill="#2a2e35" letter-spacing="-0.2">20:30</text>
<line x1="461.65" x2="461.65" y1="778.9" y2="916.4" stroke="#f0f0f1" stroke-width="0.8"/>
<text x="461.65" y="925.52" transform="rotate(0.03 461.65 925.52)" stroke="#2a2e35" stroke-width="0.16" text-anchor="middle" font-size="8.15" font-weight="400" fill="#2a2e35" letter-spacing="-0.2">20:35</text>
<line x1="498.57" x2="498.57" y1="778.9" y2="916.4" stroke="#f0f0f1" stroke-width="0.8"/>
<text x="498.57" y="925.52" transform="rotate(0.03 498.57 925.52)" stroke="#2a2e35" stroke-width="0.16" text-anchor="middle" font-size="8.15" font-weight="400" fill="#2a2e35" letter-spacing="-0.2">20:40</text>
<path d="M175.3 913.76 L514.2 913.76" fill="none" stroke="#6c5d9b" stroke-width="1.7" stroke-linejoin="round"/>
<text x="424.25" y="761.28" transform="rotate(0.03 424.25 761.28)" stroke="#1f242b" stroke-width="0.1" text-anchor="middle" font-size="8.6" font-weight="700" fill="#1f242b" letter-spacing="-0.24">Packets Out Of Sequence</text>
<rect x="522.5" y="778.35" width="8.5" height="2.7" rx="0.9" fill="#56a64b"/>
<text x="536" y="781.97" transform="rotate(0.03 536 781.97)" stroke="#2a2e35" stroke-width="0.16" text-anchor="start" font-size="8.15" font-weight="400" fill="#2a2e35" letter-spacing="-0.235">rdma-test-rdma-tools-8hvgc - net4 - mlx5_11</text>
<rect x="522.5" y="792.57" width="8.5" height="2.7" rx="0.9" fill="#e0b400"/>
<text x="536" y="796.19" transform="rotate(0.03 536 796.19)" stroke="#2a2e35" stroke-width="0.16" text-anchor="start" font-size="8.15" font-weight="400" fill="#2a2e35" letter-spacing="-0.235">rdma-test-rdma-tools-8hvgc - net1 - mlx5_13</text>
<rect x="522.5" y="806.79" width="8.5" height="2.7" rx="0.9" fill="#5794f2"/>
<text x="536" y="810.41" transform="rotate(0.03 536 810.41)" stroke="#2a2e35" stroke-width="0.16" text-anchor="start" font-size="8.15" font-weight="400" fill="#2a2e35" letter-spacing="-0.235">rdma-test-rdma-tools-cgxqj - net4 - mlx5_15</text>
<rect x="522.5" y="821.01" width="8.5" height="2.7" rx="0.9" fill="#ec6a2b"/>
<text x="536" y="824.63" transform="rotate(0.03 536 824.63)" stroke="#2a2e35" stroke-width="0.16" text-anchor="start" font-size="8.15" font-weight="400" fill="#2a2e35" letter-spacing="-0.235">rdma-test-rdma-tools-8hvgc - net2 - mlx5_16</text>
<rect x="522.5" y="835.23" width="8.5" height="2.7" rx="0.9" fill="#e02f44"/>
<text x="536" y="838.85" transform="rotate(0.03 536 838.85)" stroke="#2a2e35" stroke-width="0.16" text-anchor="start" font-size="8.15" font-weight="400" fill="#2a2e35" letter-spacing="-0.235">rdma-test-rdma-tools-6rq56 - net2 - mlx5_17</text>
<rect x="522.5" y="849.45" width="8.5" height="2.7" rx="0.9" fill="#3274d9"/>
<text x="536" y="853.07" transform="rotate(0.03 536 853.07)" stroke="#2a2e35" stroke-width="0.16" text-anchor="start" font-size="8.15" font-weight="400" fill="#2a2e35" letter-spacing="-0.235">rdma-test-rdma-tools-6rq56 - net1 - mlx5_23</text>
<rect x="522.5" y="863.67" width="8.5" height="2.7" rx="0.9" fill="#a352cc"/>
<text x="536" y="867.29" transform="rotate(0.03 536 867.29)" stroke="#2a2e35" stroke-width="0.16" text-anchor="start" font-size="8.15" font-weight="400" fill="#2a2e35" letter-spacing="-0.235">rdma-test-rdma-tools-kfzt4 - net3 - mlx5_23</text>
<rect x="522.5" y="877.89" width="8.5" height="2.7" rx="0.9" fill="#705da0"/>
<text x="536" y="881.51" transform="rotate(0.03 536 881.51)" stroke="#2a2e35" stroke-width="0.16" text-anchor="start" font-size="8.15" font-weight="400" fill="#2a2e35" letter-spacing="-0.235">rdma-test-rdma-tools-6rq56 - net4 - mlx5_24</text>
<rect x="522.5" y="892.11" width="8.5" height="2.7" rx="0.9" fill="#19730e"/>
<text x="536" y="895.73" transform="rotate(0.03 536 895.73)" stroke="#2a2e35" stroke-width="0.16" text-anchor="start" font-size="8.15" font-weight="400" fill="#2a2e35" letter-spacing="-0.235">rdma-test-rdma-tools-cgxqj - net1 - mlx5_24</text>
<rect x="522.5" y="906.33" width="8.5" height="2.7" rx="0.9" fill="#f2cc0c"/>
<text x="536" y="909.95" transform="rotate(0.03 536 909.95)" stroke="#2a2e35" stroke-width="0.16" text-anchor="start" font-size="8.15" font-weight="400" fill="#2a2e35" letter-spacing="-0.235">rdma-test-rdma-tools-kfzt4 - net4 - mlx5_24</text>
<rect x="522.5" y="920.55" width="8.5" height="2.7" rx="0.9" fill="#447ebc"/>
<text x="536" y="924.17" transform="rotate(0.03 536 924.17)" stroke="#2a2e35" stroke-width="0.16" text-anchor="start" font-size="8.15" font-weight="400" fill="#2a2e35" letter-spacing="-0.235">rdma-test-rdma-tools-6rq56 - net3 - mlx5_26</text>
<line x1="724.8" x2="1066.2" y1="913.9" y2="913.9" stroke="#f0f0f1" stroke-width="0.8"/>
<text x="721.7" y="915.87" transform="rotate(0.03 721.7 915.87)" stroke="#2a2e35" stroke-width="0.16" text-anchor="end" font-size="8.15" font-weight="400" fill="#2a2e35" letter-spacing="-0.2">0</text>
<line x1="724.8" x2="1066.2" y1="886.9" y2="886.9" stroke="#f0f0f1" stroke-width="0.8"/>
<text x="721.7" y="888.87" transform="rotate(0.03 721.7 888.87)" stroke="#2a2e35" stroke-width="0.16" text-anchor="end" font-size="8.15" font-weight="400" fill="#2a2e35" letter-spacing="-0.2">20</text>
<line x1="724.8" x2="1066.2" y1="859.9" y2="859.9" stroke="#f0f0f1" stroke-width="0.8"/>
<text x="721.7" y="861.87" transform="rotate(0.03 721.7 861.87)" stroke="#2a2e35" stroke-width="0.16" text-anchor="end" font-size="8.15" font-weight="400" fill="#2a2e35" letter-spacing="-0.2">40</text>
<line x1="724.8" x2="1066.2" y1="832.9" y2="832.9" stroke="#f0f0f1" stroke-width="0.8"/>
<text x="721.7" y="834.87" transform="rotate(0.03 721.7 834.87)" stroke="#2a2e35" stroke-width="0.16" text-anchor="end" font-size="8.15" font-weight="400" fill="#2a2e35" letter-spacing="-0.2">60</text>
<line x1="724.8" x2="1066.2" y1="805.9" y2="805.9" stroke="#f0f0f1" stroke-width="0.8"/>
<text x="721.7" y="807.87" transform="rotate(0.03 721.7 807.87)" stroke="#2a2e35" stroke-width="0.16" text-anchor="end" font-size="8.15" font-weight="400" fill="#2a2e35" letter-spacing="-0.2">80</text>
<line x1="724.8" x2="1066.2" y1="778.9" y2="778.9" stroke="#f0f0f1" stroke-width="0.8"/>
<text x="721.7" y="780.87" transform="rotate(0.03 721.7 780.87)" stroke="#2a2e35" stroke-width="0.16" text-anchor="end" font-size="8.15" font-weight="400" fill="#2a2e35" letter-spacing="-0.2">100</text>
<line x1="755.23" x2="755.23" y1="778.9" y2="916.4" stroke="#f0f0f1" stroke-width="0.8"/>
<text x="755.23" y="925.52" transform="rotate(0.03 755.23 925.52)" stroke="#2a2e35" stroke-width="0.16" text-anchor="middle" font-size="8.15" font-weight="400" fill="#2a2e35" letter-spacing="-0.2">20:00</text>
<line x1="792.15" x2="792.15" y1="778.9" y2="916.4" stroke="#f0f0f1" stroke-width="0.8"/>
<text x="792.15" y="925.52" transform="rotate(0.03 792.15 925.52)" stroke="#2a2e35" stroke-width="0.16" text-anchor="middle" font-size="8.15" font-weight="400" fill="#2a2e35" letter-spacing="-0.2">20:05</text>
<line x1="829.07" x2="829.07" y1="778.9" y2="916.4" stroke="#f0f0f1" stroke-width="0.8"/>
<text x="829.07" y="925.52" transform="rotate(0.03 829.07 925.52)" stroke="#2a2e35" stroke-width="0.16" text-anchor="middle" font-size="8.15" font-weight="400" fill="#2a2e35" letter-spacing="-0.2">20:10</text>
<line x1="865.98" x2="865.98" y1="778.9" y2="916.4" stroke="#f0f0f1" stroke-width="0.8"/>
<text x="865.98" y="925.52" transform="rotate(0.03 865.98 925.52)" stroke="#2a2e35" stroke-width="0.16" text-anchor="middle" font-size="8.15" font-weight="400" fill="#2a2e35" letter-spacing="-0.2">20:15</text>
<line x1="902.9" x2="902.9" y1="778.9" y2="916.4" stroke="#f0f0f1" stroke-width="0.8"/>
<text x="902.9" y="925.52" transform="rotate(0.03 902.9 925.52)" stroke="#2a2e35" stroke-width="0.16" text-anchor="middle" font-size="8.15" font-weight="400" fill="#2a2e35" letter-spacing="-0.2">20:20</text>
<line x1="939.82" x2="939.82" y1="778.9" y2="916.4" stroke="#f0f0f1" stroke-width="0.8"/>
<text x="939.82" y="925.52" transform="rotate(0.03 939.82 925.52)" stroke="#2a2e35" stroke-width="0.16" text-anchor="middle" font-size="8.15" font-weight="400" fill="#2a2e35" letter-spacing="-0.2">20:25</text>
<line x1="976.73" x2="976.73" y1="778.9" y2="916.4" stroke="#f0f0f1" stroke-width="0.8"/>
<text x="976.73" y="925.52" transform="rotate(0.03 976.73 925.52)" stroke="#2a2e35" stroke-width="0.16" text-anchor="middle" font-size="8.15" font-weight="400" fill="#2a2e35" letter-spacing="-0.2">20:30</text>
<line x1="1013.65" x2="1013.65" y1="778.9" y2="916.4" stroke="#f0f0f1" stroke-width="0.8"/>
<text x="1013.65" y="925.52" transform="rotate(0.03 1013.65 925.52)" stroke="#2a2e35" stroke-width="0.16" text-anchor="middle" font-size="8.15" font-weight="400" fill="#2a2e35" letter-spacing="-0.2">20:35</text>
<line x1="1050.57" x2="1050.57" y1="778.9" y2="916.4" stroke="#f0f0f1" stroke-width="0.8"/>
<text x="1050.57" y="925.52" transform="rotate(0.03 1050.57 925.52)" stroke="#2a2e35" stroke-width="0.16" text-anchor="middle" font-size="8.15" font-weight="400" fill="#2a2e35" letter-spacing="-0.2">20:40</text>
<path d="M727.3 913.76 L1066.2 913.76" fill="none" stroke="#6c5d9b" stroke-width="1.7" stroke-linejoin="round"/>
<text x="976.65" y="761.28" transform="rotate(0.03 976.65 761.28)" stroke="#1f242b" stroke-width="0.1" text-anchor="middle" font-size="8.6" font-weight="700" fill="#1f242b" letter-spacing="-0.24">Packets In Sequence Error</text>
<rect x="1074.3" y="778.35" width="8.5" height="2.7" rx="0.9" fill="#56a64b"/>
<text x="1087.8" y="781.97" transform="rotate(0.03 1087.8 781.97)" stroke="#2a2e35" stroke-width="0.16" text-anchor="start" font-size="8.15" font-weight="400" fill="#2a2e35" letter-spacing="-0.235">rdma-test-rdma-tools-8hvgc - net4 - mlx5_11</text>
<rect x="1074.3" y="792.57" width="8.5" height="2.7" rx="0.9" fill="#e0b400"/>
<text x="1087.8" y="796.19" transform="rotate(0.03 1087.8 796.19)" stroke="#2a2e35" stroke-width="0.16" text-anchor="start" font-size="8.15" font-weight="400" fill="#2a2e35" letter-spacing="-0.235">rdma-test-rdma-tools-8hvgc - net1 - mlx5_13</text>
<rect x="1074.3" y="806.79" width="8.5" height="2.7" rx="0.9" fill="#5794f2"/>
<text x="1087.8" y="810.41" transform="rotate(0.03 1087.8 810.41)" stroke="#2a2e35" stroke-width="0.16" text-anchor="start" font-size="8.15" font-weight="400" fill="#2a2e35" letter-spacing="-0.235">rdma-test-rdma-tools-cgxqj - net4 - mlx5_15</text>
<rect x="1074.3" y="821.01" width="8.5" height="2.7" rx="0.9" fill="#ec6a2b"/>
<text x="1087.8" y="824.63" transform="rotate(0.03 1087.8 824.63)" stroke="#2a2e35" stroke-width="0.16" text-anchor="start" font-size="8.15" font-weight="400" fill="#2a2e35" letter-spacing="-0.235">rdma-test-rdma-tools-8hvgc - net2 - mlx5_16</text>
<rect x="1074.3" y="835.23" width="8.5" height="2.7" rx="0.9" fill="#e02f44"/>
<text x="1087.8" y="838.85" transform="rotate(0.03 1087.8 838.85)" stroke="#2a2e35" stroke-width="0.16" text-anchor="start" font-size="8.15" font-weight="400" fill="#2a2e35" letter-spacing="-0.235">rdma-test-rdma-tools-6rq56 - net2 - mlx5_17</text>
<rect x="1074.3" y="849.45" width="8.5" height="2.7" rx="0.9" fill="#3274d9"/>
<text x="1087.8" y="853.07" transform="rotate(0.03 1087.8 853.07)" stroke="#2a2e35" stroke-width="0.16" text-anchor="start" font-size="8.15" font-weight="400" fill="#2a2e35" letter-spacing="-0.235">rdma-test-rdma-tools-6rq56 - net1 - mlx5_23</text>
<rect x="1074.3" y="863.67" width="8.5" height="2.7" rx="0.9" fill="#a352cc"/>
<text x="1087.8" y="867.29" transform="rotate(0.03 1087.8 867.29)" stroke="#2a2e35" stroke-width="0.16" text-anchor="start" font-size="8.15" font-weight="400" fill="#2a2e35" letter-spacing="-0.235">rdma-test-rdma-tools-kfzt4 - net3 - mlx5_23</text>
<rect x="1074.3" y="877.89" width="8.5" height="2.7" rx="0.9" fill="#705da0"/>
<text x="1087.8" y="881.51" transform="rotate(0.03 1087.8 881.51)" stroke="#2a2e35" stroke-width="0.16" text-anchor="start" font-size="8.15" font-weight="400" fill="#2a2e35" letter-spacing="-0.235">rdma-test-rdma-tools-6rq56 - net4 - mlx5_24</text>
<rect x="1074.3" y="892.11" width="8.5" height="2.7" rx="0.9" fill="#19730e"/>
<text x="1087.8" y="895.73" transform="rotate(0.03 1087.8 895.73)" stroke="#2a2e35" stroke-width="0.16" text-anchor="start" font-size="8.15" font-weight="400" fill="#2a2e35" letter-spacing="-0.235">rdma-test-rdma-tools-cgxqj - net1 - mlx5_24</text>
<rect x="1074.3" y="906.33" width="8.5" height="2.7" rx="0.9" fill="#f2cc0c"/>
<text x="1087.8" y="909.95" transform="rotate(0.03 1087.8 909.95)" stroke="#2a2e35" stroke-width="0.16" text-anchor="start" font-size="8.15" font-weight="400" fill="#2a2e35" letter-spacing="-0.235">rdma-test-rdma-tools-kfzt4 - net4 - mlx5_24</text>
<rect x="1074.3" y="920.55" width="8.5" height="2.7" rx="0.9" fill="#447ebc"/>
<text x="1087.8" y="924.17" transform="rotate(0.03 1087.8 924.17)" stroke="#2a2e35" stroke-width="0.16" text-anchor="start" font-size="8.15" font-weight="400" fill="#2a2e35" letter-spacing="-0.235">rdma-test-rdma-tools-6rq56 - net3 - mlx5_26</text></svg>
</div>
</body></html>
